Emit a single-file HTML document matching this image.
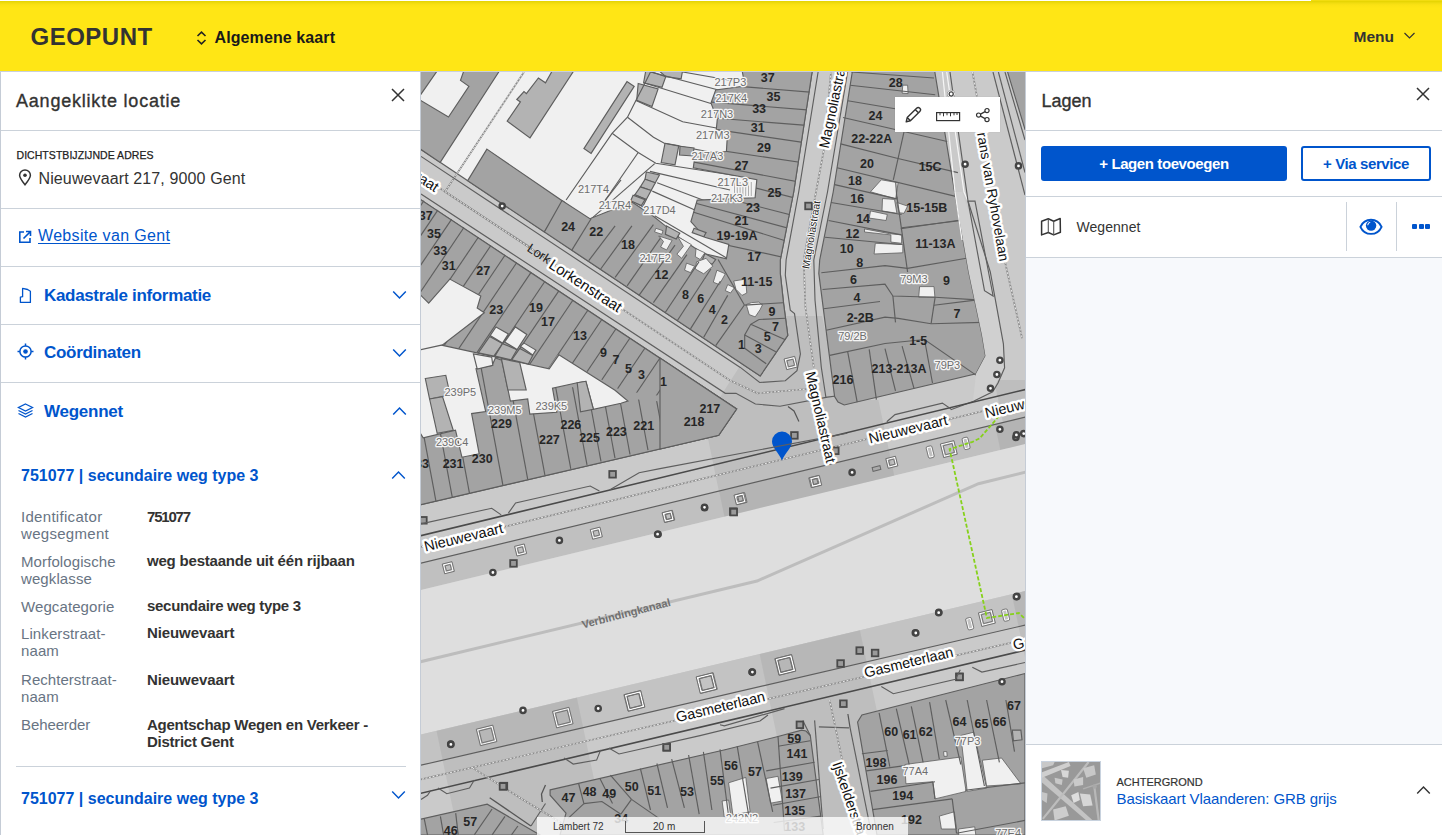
<!DOCTYPE html>
<html><head><meta charset="utf-8">
<style>
*{margin:0;padding:0;box-sizing:border-box}
html,body{width:1442px;height:835px;overflow:hidden;background:#fff;font-family:"Liberation Sans",sans-serif;color:#333332}
.a{position:absolute;white-space:nowrap}
#hdr{position:absolute;left:0;top:1px;width:1442px;height:70px;background:linear-gradient(#e4d300 0px,#f0dc10 2px,#fbe214 4px,#ffe615 7px)}
#topline{position:absolute;left:0;top:0;width:1310px;height:1px;background:#fff}
#hb{position:absolute;left:0;top:71px;width:1442px;height:1px;background:#c9d0dc}
#left{position:absolute;left:0;top:72px;width:421px;height:763px;background:#fff;border-left:1px solid #c5ccd6;border-right:1px solid #c5ccd6}
.hr{position:absolute;height:1px;background:#cbd2da}
.blue{color:#0055cc}
.b{font-weight:bold}
#right{position:absolute;left:1025px;top:72px;width:417px;height:763px;background:#fff;border-left:1px solid #c5ccd6}
#map{position:absolute;left:421px;top:72px;width:604px;height:763px;overflow:hidden;background:#f0f0f0}
.lbl{color:#687483;font-size:15px;line-height:17px}
.val{font-size:15px;line-height:17px;font-weight:bold;color:#333332}
</style></head><body>
<div id="topline"></div><div style="position:absolute;left:1311px;top:0;width:131px;height:1px;background:#f2dc10"></div>
<div id="hdr">
  <div class="a b" style="left:30.5px;top:23.6px;font-size:24px;line-height:24px;color:#333332;letter-spacing:0.5px">GEOPUNT</div>
  <svg class="a" style="left:196px;top:30px" width="11" height="14" viewBox="0 0 11 14"><path d="M1.5 5 L5.5 1.2 L9.5 5 M1.5 9 L5.5 12.8 L9.5 9" fill="none" stroke="#222" stroke-width="1.6"/></svg>
  <div class="a b" style="left:214.5px;top:28.8px;font-size:16px;line-height:16px;color:#1a1a1a;letter-spacing:0.1px">Algemene kaart</div>
  <div class="a b" style="left:1353.5px;top:27.8px;font-size:15.5px;line-height:15.5px;color:#333332">Menu</div>
  <svg class="a" style="left:1403px;top:30px" width="13" height="9" viewBox="0 0 13 9"><path d="M1.5 2 L6.5 7 L11.5 2" fill="none" stroke="#333" stroke-width="1.2"/></svg>
</div>
<div id="hb"></div>


<div id="lb" style="position:absolute;left:0;top:72px;width:1px;height:763px;background:#c5ccd6"></div>
<div id="lr" style="position:absolute;left:420px;top:72px;width:1px;height:763px;background:#c5ccd6"></div>
<div class="a" style="left:16px;top:91.8px;font-size:18px;line-height:18px;letter-spacing:0.79px;-webkit-text-stroke:0.35px #333332">Aangeklikte locatie</div>
<svg class="a" style="left:391px;top:88px" width="14" height="14" viewBox="0 0 14 14"><path d="M1 1 L13 13 M13 1 L1 13" stroke="#333" stroke-width="1.5" fill="none"/></svg>
<div class="hr" style="left:1px;top:130px;width:419px"></div>
<div class="a" style="left:16.5px;top:150px;font-size:10.5px;line-height:10.5px;letter-spacing:0.05px;color:#222;-webkit-text-stroke:0.25px #222">DICHTSTBIJZIJNDE ADRES</div>
<svg class="a" style="left:18px;top:169px" width="14" height="17" viewBox="0 0 14 17"><path d="M7 15.8 C3.5 11.5 1.6 8.6 1.6 6.3 A5.4 5.4 0 0 1 12.4 6.3 C12.4 8.6 10.5 11.5 7 15.8 Z" fill="none" stroke="#333" stroke-width="1.5"/><circle cx="7" cy="6.3" r="1.8" fill="#333"/></svg>
<div class="a" style="left:38.5px;top:171.2px;font-size:16px;line-height:16px;letter-spacing:0.12px">Nieuwevaart 217, 9000 Gent</div>
<div class="hr" style="left:1px;top:208px;width:419px"></div>
<svg class="a" style="left:18px;top:230px" width="14" height="14" viewBox="0 0 14 14"><path d="M6 2 H1.8 V12.2 H12 V8" fill="none" stroke="#0055cc" stroke-width="1.6"/><path d="M8 1.5 H12.5 V6 M12.5 1.5 L5.5 8.5" fill="none" stroke="#0055cc" stroke-width="1.6"/></svg>
<div class="a blue" style="left:38px;top:228.4px;font-size:16px;line-height:16px;letter-spacing:0.33px;text-decoration:underline;text-underline-offset:2px">Website van Gent</div>
<div class="hr" style="left:1px;top:266px;width:419px"></div>
<svg class="a" style="left:18px;top:287px" width="14" height="17" viewBox="0 0 14 17"><path d="M4.6 1.4 L9.6 2.5 L12.4 4.2 L12.4 15.4 L2.4 15.4 L2.4 10.1 L4.6 9.7 Z" fill="none" stroke="#0055cc" stroke-width="1.3" stroke-linejoin="round"/></svg>
<div class="a blue b" style="left:44px;top:286.8px;font-size:17px;line-height:17px;letter-spacing:-0.33px">Kadastrale informatie</div>
<svg class="a" style="left:392px;top:290px" width="15" height="10" viewBox="0 0 15 10"><path d="M1.2 1.5 L7.5 8 L13.8 1.5" fill="none" stroke="#0055cc" stroke-width="1.5"/></svg>
<div class="hr" style="left:1px;top:324px;width:419px"></div>
<svg class="a" style="left:17px;top:343px" width="17" height="17" viewBox="0 0 17 17"><circle cx="8.5" cy="8.5" r="5.6" fill="none" stroke="#0055cc" stroke-width="1.5"/><circle cx="8.5" cy="8.5" r="2.3" fill="#0055cc"/><path d="M8.5 0.5V2.9M8.5 14.1V16.5M0.5 8.5H2.9M14.1 8.5H16.5" stroke="#0055cc" stroke-width="1.5"/></svg>
<div class="a blue b" style="left:44px;top:344.4px;font-size:17px;line-height:17px;letter-spacing:-0.3px">Coördinaten</div>
<svg class="a" style="left:392px;top:348px" width="15" height="10" viewBox="0 0 15 10"><path d="M1.2 1.5 L7.5 8 L13.8 1.5" fill="none" stroke="#0055cc" stroke-width="1.5"/></svg>
<div class="hr" style="left:1px;top:382px;width:419px"></div>
<svg class="a" style="left:17px;top:403px" width="17" height="15" viewBox="0 0 17 15"><path d="M8.5 1 L15.5 4.5 L8.5 8 L1.5 4.5 Z" fill="none" stroke="#0055cc" stroke-width="1.3"/><path d="M1.5 7.5 L8.5 11 L15.5 7.5 M1.5 10.5 L8.5 14 L15.5 10.5" fill="none" stroke="#0055cc" stroke-width="1.3"/></svg>
<div class="a blue b" style="left:44px;top:402.6px;font-size:17px;line-height:17px;letter-spacing:-0.25px">Wegennet</div>
<svg class="a" style="left:392px;top:406px" width="15" height="10" viewBox="0 0 15 10"><path d="M1.2 8.5 L7.5 2 L13.8 8.5" fill="none" stroke="#0055cc" stroke-width="1.5"/></svg>
<div class="a blue b" style="left:21px;top:468px;font-size:16px;line-height:16px">751077 | secundaire weg type 3</div>
<svg class="a" style="left:391px;top:470px" width="15" height="10" viewBox="0 0 15 10"><path d="M1.2 8.5 L7.5 2 L13.8 8.5" fill="none" stroke="#0055cc" stroke-width="1.4"/></svg>
<div class="a lbl" style="left:21px;top:508.3px;letter-spacing:0.3px">Identificator<br>wegsegment</div>
<div class="a lbl" style="left:21px;top:553.3px;letter-spacing:0.1px">Morfologische<br>wegklasse</div>
<div class="a lbl" style="left:21px;top:598px;letter-spacing:0.1px">Wegcategorie</div>
<div class="a lbl" style="left:21px;top:625.2px;letter-spacing:0.1px">Linkerstraat-<br>naam</div>
<div class="a lbl" style="left:21px;top:671px;letter-spacing:0.05px">Rechterstraat-<br>naam</div>
<div class="a lbl" style="left:21px;top:716.3px;letter-spacing:-0.1px">Beheerder</div>
<div class="a val" style="left:147px;top:507.7px;letter-spacing:-1.2px">751077</div>
<div class="a val" style="left:147px;top:552.3px;letter-spacing:-0.2px">weg bestaande uit één rijbaan</div>
<div class="a val" style="left:147px;top:597.3px;letter-spacing:-0.3px">secundaire weg type 3</div>
<div class="a val" style="left:147px;top:624.3px;letter-spacing:-0.1px">Nieuwevaart</div>
<div class="a val" style="left:147px;top:670.8px;letter-spacing:-0.1px">Nieuwevaart</div>
<div class="a val" style="left:147px;top:715.5px;letter-spacing:-0.25px">Agentschap Wegen en Verkeer -<br>District Gent</div>
<div class="hr" style="left:16px;top:766px;width:390px"></div>
<div class="a blue b" style="left:21px;top:790.5px;font-size:16px;line-height:16px">751077 | secundaire weg type 3</div>
<svg class="a" style="left:391px;top:790px" width="15" height="10" viewBox="0 0 15 10"><path d="M1.2 1.5 L7.5 8 L13.8 1.5" fill="none" stroke="#0055cc" stroke-width="1.4"/></svg>


<div id="map"><svg width="604" height="763" viewBox="421 72 604 763" style="position:absolute;left:0;top:0;font-family:Liberation Sans"><rect x="421" y="72" width="604" height="763" fill="#cacaca"/>
<polygon points="747.0,355.0 785.0,316.0 822.0,316.0 840.0,400.0 878.4,400.0 895.0,479.0 724.5,518.6 707.8,437.4 721.0,395.4" fill="rgba(0,0,0,0.06)" stroke="none" stroke-width="1.15" />
<polygon points="994.0,380.0 1040.0,380.0 1040.0,600.0 1040.0,600.0" fill="rgba(0,0,0,0.06)" stroke="none" stroke-width="1.15" />
<polygon points="419.0,70.0 812.4,70.0 793.7,192.0 780.3,260.0 780.3,273.4 783.6,303.6 787.8,335.4 760.2,376.0 419.0,148.2" fill="#f0f0f0" stroke="#5e5e5e" stroke-width="1.15" />
<polygon points="419.0,198.6 736.6,409.0 718.7,435.3 419.0,505.0" fill="#f0f0f0" stroke="#5e5e5e" stroke-width="1.15" />
<polygon points="1007.0,70.0 1030.0,70.0 1030.0,135.0 1025.0,129.5" fill="#a3a3a3" stroke="#5e5e5e" stroke-width="1.15" />
<polygon points="419.0,70.0 500.0,70.0 440.2,162.4 419.0,148.2" fill="#a3a3a3" stroke="#5e5e5e" stroke-width="1.15" />
<polygon points="437.8,70.0 464.1,70.0 460.5,80.4 468.9,86.4 448.5,117.0 419.0,99.5 419.0,97.0" fill="#f0f0f0" stroke="#5e5e5e" stroke-width="1.15" />
<polygon points="507.2,121.1 520.4,101.9 516.8,99.5 524.0,91.6 526.4,93.6 538.4,78.0 545.5,82.8 552.7,70.0 574.3,70.0 530.0,137.9" fill="#b3b3b3" stroke="#5e5e5e" stroke-width="1.15" />
<polygon points="583.9,148.6 591.1,153.4 634.2,86.4 627.0,81.6" fill="#b3b3b3" stroke="#5e5e5e" stroke-width="1.15" />
<polygon points="486.9,149.1 564.7,202.5 544.4,231.9 467.7,180.7" fill="#a3a3a3" stroke="#5e5e5e" stroke-width="1.15" />
<polyline points="524.0,72.0 445.0,191.8 531.2,248.0" fill="none" stroke="#8c8c8c" stroke-width="1.7"/>
<polyline points="524.0,72.0 445.0,191.8 531.2,248.0" fill="none" stroke="#f2f2f2" stroke-width="0.9" stroke-dasharray="2,1.6"/>
<polygon points="645.9,70.0 665.8,76.6 662.0,87.3 643.6,82.7" fill="#b3b3b3" stroke="#5e5e5e" stroke-width="1.15" />
<polygon points="638.2,83.5 658.1,88.9 652.0,106.5 636.7,100.4" fill="#b3b3b3" stroke="#5e5e5e" stroke-width="1.15" />
<polygon points="658.1,70.0 682.7,70.0 681.1,78.9 665.8,76.6" fill="#b3b3b3" stroke="#5e5e5e" stroke-width="1.15" />
<polygon points="665.0,143.3 678.8,145.6 675.0,164.8 661.2,162.5" fill="#b3b3b3" stroke="#5e5e5e" stroke-width="1.15" />
<polygon points="646.3,172.0 659.5,175.0 655.3,182.8 645.1,179.2" fill="#b3b3b3" stroke="#5e5e5e" stroke-width="1.15" />
<polygon points="645.1,179.2 655.3,182.8 651.1,190.5 640.3,186.9" fill="#b3b3b3" stroke="#5e5e5e" stroke-width="1.15" />
<polygon points="640.3,186.9 651.1,190.5 646.3,199.5 634.9,194.7" fill="#b3b3b3" stroke="#5e5e5e" stroke-width="1.15" />
<polygon points="634.9,194.7 646.3,199.5 642.7,206.7 631.9,200.7" fill="#b3b3b3" stroke="#5e5e5e" stroke-width="1.15" />
<polyline points="566.1,200.0 612.1,133.3 627.5,117.2 635.9,100.4 645.9,81.2 650.5,72.0" fill="none" stroke="#5e5e5e" stroke-width="1.15" />
<polyline points="604.0,202.0 638.2,152.5" fill="none" stroke="#5e5e5e" stroke-width="1.15" />
<polyline points="612.1,133.3 638.2,152.5 655.8,163.2 740.0,176.3" fill="none" stroke="#5e5e5e" stroke-width="1.15" />
<polyline points="627.5,117.2 653.5,137.2 664.3,143.3 740.0,157.9" fill="none" stroke="#5e5e5e" stroke-width="1.15" />
<polyline points="635.9,100.4 682.7,121.8 716.4,128.0" fill="none" stroke="#5e5e5e" stroke-width="1.15" />
<polyline points="643.6,82.7 713.3,104.2" fill="none" stroke="#5e5e5e" stroke-width="1.15" />
<polyline points="650.5,72.0 728.7,92.7" fill="none" stroke="#5e5e5e" stroke-width="1.15" />
<polyline points="649.9,171.4 730.0,190.0" fill="none" stroke="#5e5e5e" stroke-width="1.15" />
<polyline points="657.1,182.8 730.0,210.3" fill="none" stroke="#5e5e5e" stroke-width="1.15" />
<polyline points="652.3,191.1 695.4,210.3 730.0,227.0" fill="none" stroke="#5e5e5e" stroke-width="1.15" />
<polyline points="654.7,215.7 730.0,260.0" fill="none" stroke="#5e5e5e" stroke-width="1.15" />
<polyline points="590.0,219.9 654.7,163.6" fill="none" stroke="#5e5e5e" stroke-width="1.15" />
<polyline points="682.7,72.0 740.0,82.0" fill="none" stroke="#5e5e5e" stroke-width="1.15" />
<polyline points="605.4,200.1 621.0,179.8" fill="none" stroke="#5e5e5e" stroke-width="1.15" />
<polygon points="680.0,146.2 694.0,148.0 693.0,156.0 679.5,155.0" fill="#a3a3a3" stroke="#5e5e5e" stroke-width="1.15" />
<rect x="732.5" y="180" width="21" height="17.5" fill="#f4f4f4"/>
<line x1="734.5" y1="182" x2="734.5" y2="196" stroke="#9a9a9a" stroke-width="0.8"/>
<line x1="737.3" y1="182" x2="737.3" y2="196" stroke="#9a9a9a" stroke-width="0.8"/>
<line x1="740.1" y1="182" x2="740.1" y2="196" stroke="#9a9a9a" stroke-width="0.8"/>
<line x1="742.9" y1="182" x2="742.9" y2="196" stroke="#9a9a9a" stroke-width="0.8"/>
<line x1="745.7" y1="182" x2="745.7" y2="196" stroke="#9a9a9a" stroke-width="0.8"/>
<line x1="748.5" y1="182" x2="748.5" y2="196" stroke="#9a9a9a" stroke-width="0.8"/>
<line x1="751.3" y1="182" x2="751.3" y2="196" stroke="#9a9a9a" stroke-width="0.8"/>
<polygon points="544.4,231.9 562.0,200.5 589.9,218.7 631.9,202.0 653.4,216.3 665.4,225.9 679.8,237.9 694.1,247.5 703.7,253.5 726.4,258.8 728.8,244.5 704.8,237.3 690.9,221.7 697.2,200.1 755.1,197.7 756.8,179.8 693.3,167.8 695.3,153.4 726.4,151.5 727.6,131.9 716.3,129.5 717.3,119.4 711.0,103.1 715.7,90.0 745.0,86.0 742.0,70.0 812.4,70.0 793.7,192.0 780.3,260.0 780.3,273.4 783.6,303.6 787.8,335.4 760.2,376.0" fill="#a3a3a3" stroke="#5e5e5e" stroke-width="1.15" />
<polygon points="633.1,195.3 645.0,199.6 641.4,205.6 630.7,200.8" fill="#b3b3b3" stroke="#5e5e5e" stroke-width="1.15" />
<polygon points="666.6,225.9 679.8,233.1 676.2,239.1 665.4,234.3" fill="#b3b3b3" stroke="#5e5e5e" stroke-width="1.15" />
<polygon points="694.1,228.3 706.1,232.6 703.7,236.7 692.2,232.6" fill="#b3b3b3" stroke="#5e5e5e" stroke-width="1.15" />
<polygon points="704.9,253.5 715.7,259.5 712.1,264.3 702.5,259.5" fill="#b3b3b3" stroke="#5e5e5e" stroke-width="1.15" />
<polygon points="655.8,228.3 663.0,230.7 661.8,234.3 654.6,231.9" fill="#f0f0f0" stroke="#5e5e5e" stroke-width="0.8" />
<polygon points="658.7,236.0 672.1,240.3 666.6,249.9 660.6,247.0 663.5,241.5" fill="#f0f0f0" stroke="#5e5e5e" stroke-width="0.8" />
<polygon points="677.8,236.7 691.3,244.6 681.7,258.3 676.9,254.2 683.4,246.3" fill="#f0f0f0" stroke="#5e5e5e" stroke-width="0.8" />
<polygon points="696.0,248.7 704.9,252.8 700.1,259.5 695.3,256.6" fill="#f0f0f0" stroke="#5e5e5e" stroke-width="0.8" />
<polygon points="686.5,263.1 694.6,266.2 690.5,272.6 684.6,270.2" fill="#f0f0f0" stroke="#5e5e5e" stroke-width="0.8" />
<polygon points="696.5,261.9 706.1,258.3 712.8,266.2 703.7,273.8 695.3,269.0" fill="#f0f0f0" stroke="#5e5e5e" stroke-width="0.8" />
<polygon points="716.9,270.2 725.3,273.8 719.3,284.6 713.3,282.2" fill="#f0f0f0" stroke="#5e5e5e" stroke-width="0.8" />
<polygon points="727.7,284.6 734.4,287.7 730.5,293.0 725.3,290.6" fill="#f0f0f0" stroke="#5e5e5e" stroke-width="0.8" />
<polygon points="733.7,281.0 745.6,279.1 746.8,293.0 742.0,295.4 736.0,289.4" fill="#f0f0f0" stroke="#5e5e5e" stroke-width="0.8" />
<polygon points="746.3,304.5 751.6,302.6 758.8,302.1 762.4,305.0 760.0,309.8 755.2,316.9 749.2,314.6" fill="#f0f0f0" stroke="#5e5e5e" stroke-width="0.8" />
<polyline points="572.0,249.9 591.1,218.7" fill="none" stroke="#5e5e5e" stroke-width="1.15" />
<polyline points="588.7,260.7 615.1,225.9" fill="none" stroke="#5e5e5e" stroke-width="1.15" />
<polyline points="600.7,269.0 631.9,225.9" fill="none" stroke="#5e5e5e" stroke-width="1.15" />
<polyline points="615.1,277.4 653.4,224.7" fill="none" stroke="#5e5e5e" stroke-width="1.15" />
<polyline points="627.1,285.8 660.6,237.9" fill="none" stroke="#5e5e5e" stroke-width="1.15" />
<polyline points="639.0,295.4 675.0,245.1" fill="none" stroke="#5e5e5e" stroke-width="1.15" />
<polyline points="653.4,302.6 686.9,254.7" fill="none" stroke="#5e5e5e" stroke-width="1.15" />
<polyline points="665.4,312.2 698.9,261.9" fill="none" stroke="#5e5e5e" stroke-width="1.15" />
<polyline points="677.4,320.5 710.9,269.0" fill="none" stroke="#5e5e5e" stroke-width="1.15" />
<polyline points="690.5,328.9 720.5,281.0" fill="none" stroke="#5e5e5e" stroke-width="1.15" />
<polyline points="703.7,337.3 727.7,295.4" fill="none" stroke="#5e5e5e" stroke-width="1.15" />
<polyline points="715.7,345.7 744.4,305.0" fill="none" stroke="#5e5e5e" stroke-width="1.15" />
<polyline points="718.1,259.5 744.4,305.0" fill="none" stroke="#5e5e5e" stroke-width="1.15" />
<polyline points="759.0,319.5 785.4,318.3" fill="none" stroke="#5e5e5e" stroke-width="1.15" />
<polyline points="750.7,324.3 785.4,339.8" fill="none" stroke="#5e5e5e" stroke-width="1.15" />
<polyline points="744.7,335.0 775.8,351.8" fill="none" stroke="#5e5e5e" stroke-width="1.15" />
<polyline points="744.7,348.2 766.2,363.8" fill="none" stroke="#5e5e5e" stroke-width="1.15" />
<polyline points="759.0,319.5 750.7,324.3 744.7,335.0 744.7,348.2" fill="none" stroke="#5e5e5e" stroke-width="1.15" />
<polyline points="744.7,305.1 783.0,302.7" fill="none" stroke="#5e5e5e" stroke-width="1.15" />
<clipPath id="cNW"><polygon points="544.4,231.9 562.0,200.5 589.9,218.7 631.9,202.0 653.4,216.3 665.4,225.9 679.8,237.9 694.1,247.5 703.7,253.5 726.4,258.8 728.8,244.5 704.8,237.3 690.9,221.7 697.2,200.1 755.1,197.7 756.8,179.8 693.3,167.8 695.3,153.4 726.4,151.5 727.6,131.9 716.3,129.5 717.3,119.4 711.0,103.1 715.7,90.0 745.0,86.0 742.0,72.0 812.4,72.0 793.7,192.0 780.3,260.0 780.3,273.4 783.6,303.6 787.8,335.4 760.2,376.0"/></clipPath><g clip-path="url(#cNW)">
<polyline points="692.9,82.6 819.8,92.9" fill="none" stroke="#5e5e5e" stroke-width="1.15" />
<polyline points="692.9,100.6 819.8,110.9" fill="none" stroke="#5e5e5e" stroke-width="1.15" />
<polyline points="692.9,116.2 819.8,126.5" fill="none" stroke="#5e5e5e" stroke-width="1.15" />
<polyline points="692.9,126.1 819.8,144.9" fill="none" stroke="#5e5e5e" stroke-width="1.15" />
<polyline points="692.9,146.4 819.8,165.3" fill="none" stroke="#5e5e5e" stroke-width="1.15" />
<polyline points="692.9,161.9 819.8,185.9" fill="none" stroke="#5e5e5e" stroke-width="1.15" />
<polyline points="692.9,171.8 819.8,204.4" fill="none" stroke="#5e5e5e" stroke-width="1.15" />
<polyline points="692.9,189.8 819.8,222.3" fill="none" stroke="#5e5e5e" stroke-width="1.15" />
<polyline points="692.9,202.5 819.8,236.8" fill="none" stroke="#5e5e5e" stroke-width="1.15" />
<polyline points="692.9,212.0 819.8,251.5" fill="none" stroke="#5e5e5e" stroke-width="1.15" />
<polyline points="692.9,237.7 819.8,265.2" fill="none" stroke="#5e5e5e" stroke-width="1.15" />
</g>
<polygon points="419.0,198.6 736.6,409.0 718.7,435.3 419.0,505.0" fill="#a3a3a3" stroke="#5e5e5e" stroke-width="1.15" />
<clipPath id="cSL"><polygon points="421.0,198.6 736.6,409.0 690.0,400.0 621.0,390.6 557.5,355.0 548.3,368.4 441.6,345.3 421.0,335.0"/></clipPath><clipPath id="cNV"><polygon points="421.0,505.0 718.7,435.3 700.0,405.0 621.0,398.0 540.0,380.0 421.0,355.0"/></clipPath><g clip-path="url(#cSL)">
<polyline points="424.0,200.6 334.6,333.2" fill="none" stroke="#5e5e5e" stroke-width="1.15" />
<polyline points="438.0,209.9 348.6,342.6" fill="none" stroke="#5e5e5e" stroke-width="1.15" />
<polyline points="451.7,219.1 362.3,351.7" fill="none" stroke="#5e5e5e" stroke-width="1.15" />
<polyline points="464.1,227.3 374.7,360.0" fill="none" stroke="#5e5e5e" stroke-width="1.15" />
<polyline points="478.5,237.0 389.1,369.6" fill="none" stroke="#5e5e5e" stroke-width="1.15" />
<polyline points="491.0,245.3 401.6,377.9" fill="none" stroke="#5e5e5e" stroke-width="1.15" />
<polyline points="505.3,254.8 415.9,387.5" fill="none" stroke="#5e5e5e" stroke-width="1.15" />
<polyline points="516.8,262.5 427.4,395.1" fill="none" stroke="#5e5e5e" stroke-width="1.15" />
<polyline points="531.2,272.1 441.8,404.7" fill="none" stroke="#5e5e5e" stroke-width="1.15" />
<polyline points="545.0,281.3 455.6,413.9" fill="none" stroke="#5e5e5e" stroke-width="1.15" />
<polyline points="559.0,290.6 469.6,423.3" fill="none" stroke="#5e5e5e" stroke-width="1.15" />
<polyline points="573.0,300.0 483.6,432.6" fill="none" stroke="#5e5e5e" stroke-width="1.15" />
<polyline points="588.0,310.0 498.6,442.6" fill="none" stroke="#5e5e5e" stroke-width="1.15" />
<polyline points="602.0,319.3 512.6,452.0" fill="none" stroke="#5e5e5e" stroke-width="1.15" />
<polyline points="616.0,328.7 526.6,461.3" fill="none" stroke="#5e5e5e" stroke-width="1.15" />
<polyline points="630.0,338.0 540.6,470.6" fill="none" stroke="#5e5e5e" stroke-width="1.15" />
<polyline points="645.0,348.0 555.6,480.6" fill="none" stroke="#5e5e5e" stroke-width="1.15" />
<polyline points="660.0,358.0 570.6,490.7" fill="none" stroke="#5e5e5e" stroke-width="1.15" />
<polyline points="675.0,368.0 585.6,500.7" fill="none" stroke="#5e5e5e" stroke-width="1.15" />
<polyline points="690.0,378.0 600.6,510.7" fill="none" stroke="#5e5e5e" stroke-width="1.15" />
<polyline points="705.0,388.0 615.6,520.7" fill="none" stroke="#5e5e5e" stroke-width="1.15" />
</g><g clip-path="url(#cNV)">
<polyline points="436.0,501.4 412.3,373.6" fill="none" stroke="#5e5e5e" stroke-width="1.15" />
<polyline points="452.3,497.4 428.6,369.6" fill="none" stroke="#5e5e5e" stroke-width="1.15" />
<polyline points="469.5,493.3 445.8,365.5" fill="none" stroke="#5e5e5e" stroke-width="1.15" />
<polyline points="502.9,485.2 479.2,357.4" fill="none" stroke="#5e5e5e" stroke-width="1.15" />
<polyline points="527.7,479.2 504.0,351.4" fill="none" stroke="#5e5e5e" stroke-width="1.15" />
<polyline points="544.9,475.1 521.2,347.3" fill="none" stroke="#5e5e5e" stroke-width="1.15" />
<polyline points="570.8,468.8 547.1,341.0" fill="none" stroke="#5e5e5e" stroke-width="1.15" />
<polyline points="587.0,464.9 563.3,337.1" fill="none" stroke="#5e5e5e" stroke-width="1.15" />
<polyline points="601.0,461.5 577.3,333.7" fill="none" stroke="#5e5e5e" stroke-width="1.15" />
<polyline points="615.0,458.1 591.3,330.3" fill="none" stroke="#5e5e5e" stroke-width="1.15" />
<polyline points="630.0,454.5 606.3,326.7" fill="none" stroke="#5e5e5e" stroke-width="1.15" />
<polyline points="648.0,450.1 624.3,322.3" fill="none" stroke="#5e5e5e" stroke-width="1.15" />
<polyline points="665.0,446.0 641.3,318.2" fill="none" stroke="#5e5e5e" stroke-width="1.15" />
<polyline points="683.0,441.7 659.3,313.9" fill="none" stroke="#5e5e5e" stroke-width="1.15" />
</g>
<polygon points="419.0,431.3 423.2,437.8 455.5,430.2 461.9,457.2 479.2,453.9 471.6,413.6 485.7,411.5 476.0,368.8 492.1,365.6 495.4,358.0 501.8,360.2 510.4,401.1 527.7,399.0 529.8,414.1 556.8,412.3 552.5,388.2 577.2,382.8 585.9,381.3 593.4,409.3 621.0,403.3 627.9,401.1 615.0,390.3 558.9,354.8 549.2,368.8 441.5,345.1 419.0,330.0" fill="#f0f0f0" stroke="#5e5e5e" stroke-width="1.15" />
<polygon points="419.0,293.5 428.7,303.1 449.8,279.1 480.8,296.0 477.2,308.1 484.3,312.7 442.5,344.9 419.0,350.1" fill="#f0f0f0" stroke="#5e5e5e" stroke-width="1.15" />
<polygon points="425.3,378.5 445.8,375.3 450.1,394.7 429.6,399.0" fill="#b3b3b3" stroke="#5e5e5e" stroke-width="1.15" />
<polygon points="429.6,399.0 442.6,396.8 453.3,430.2 437.2,433.4" fill="#b3b3b3" stroke="#5e5e5e" stroke-width="1.15" />
<polygon points="577.2,382.8 585.9,381.3 593.4,409.3 580.5,411.9" fill="#b3b3b3" stroke="#5e5e5e" stroke-width="1.15" />
<polygon points="478.3,352.8 489.6,336.6 502.5,343.6 493.9,356.0" fill="#b3b3b3" stroke="#5e5e5e" stroke-width="1.15" />
<polygon points="495.0,356.0 502.5,343.6 517.1,349.6 511.1,359.8" fill="#b3b3b3" stroke="#5e5e5e" stroke-width="1.15" />
<polygon points="511.7,359.8 519.8,348.5 532.7,355.5 528.4,364.1" fill="#b3b3b3" stroke="#5e5e5e" stroke-width="1.15" />
<polygon points="501.4,358.7 519.7,362.5 526.2,390.0 507.9,390.0" fill="#b3b3b3" stroke="#5e5e5e" stroke-width="1.15" />
<polygon points="490.1,335.6 496.0,326.9 508.4,333.9 502.5,343.1" fill="#f0f0f0" stroke="#5e5e5e" stroke-width="1.15" />
<polygon points="504.7,342.0 515.4,326.9 526.8,334.5 517.1,349.6" fill="#f0f0f0" stroke="#5e5e5e" stroke-width="1.15" />
<polygon points="520.3,346.3 524.1,343.1 535.9,350.1 532.7,355.0" fill="#f0f0f0" stroke="#5e5e5e" stroke-width="1.15" />
<polygon points="473.4,353.9 491.7,357.1 492.8,365.2 477.2,369.0" fill="#f0f0f0" stroke="#5e5e5e" stroke-width="1.15" />
<polyline points="421.0,156.4 740.3,367.4 759.7,382.5 785.3,380.7 797.0,370.6 800.4,353.9 794.5,313.6 790.3,310.3 785.3,275.1 786.1,260.0 798.7,192.0 818.1,72.0" fill="none" stroke="#5e5e5e" stroke-width="1.15" />
<polyline points="421.0,175.7 729.6,380.3 757.6,393.3 807.1,389.0" fill="none" stroke="#8c8c8c" stroke-width="1.7"/>
<polyline points="421.0,175.7 729.6,380.3 757.6,393.3 807.1,389.0" fill="none" stroke="#f2f2f2" stroke-width="0.9" stroke-dasharray="2,1.6"/>
<polyline points="831.0,72.0 823.9,149.6 816.0,192.0 803.7,260.0 805.4,307.0 813.8,367.3" fill="none" stroke="#8c8c8c" stroke-width="1.7"/>
<polyline points="831.0,72.0 823.9,149.6 816.0,192.0 803.7,260.0 805.4,307.0 813.8,367.3" fill="none" stroke="#f2f2f2" stroke-width="0.9" stroke-dasharray="2,1.6"/>
<polyline points="421.0,194.0 725.3,393.3 736.0,393.3 755.4,404.0 780.0,406.2 827.4,397.1 840.0,395.5" fill="none" stroke="#5e5e5e" stroke-width="1.15" />
<polyline points="788.0,406.4 794.0,411.0 798.9,421.4" fill="none" stroke="#555" stroke-width="1.2" />
<polygon points="660.0,357.9 736.6,409.0 718.7,435.3 660.0,449.0" fill="#a3a3a3" stroke="#5e5e5e" stroke-width="1.15" />
<polygon points="852.6,70.0 934.5,70.0 954.6,192.0 968.7,272.0 982.0,335.0 985.5,356.0 976.0,373.8 844.2,405.0 838.0,402.0 834.6,396.5 818.8,273.4 819.7,260.0 833.2,192.0" fill="#a3a3a3" stroke="#5e5e5e" stroke-width="1.15" />
<polygon points="870.5,191.8 881.3,179.8 898.1,182.7 895.7,198.9" fill="#f0f0f0" stroke="#5e5e5e" stroke-width="0.8" />
<polygon points="882.5,198.5 894.5,199.4 896.9,213.3 882.0,210.9" fill="#f0f0f0" stroke="#5e5e5e" stroke-width="0.8" />
<polygon points="896.9,202.5 907.6,206.1 904.0,213.3 899.3,212.8" fill="#f0f0f0" stroke="#5e5e5e" stroke-width="0.8" />
<polygon points="870.5,210.9 887.3,214.5 886.1,220.5 869.3,218.1" fill="#f0f0f0" stroke="#5e5e5e" stroke-width="0.8" />
<polygon points="864.5,228.9 889.7,233.7 901.6,234.9 901.6,243.3 890.9,242.1 890.9,234.9 864.5,232.0" fill="#f0f0f0" stroke="#5e5e5e" stroke-width="0.8" />
<polygon points="875.3,243.3 902.8,244.5 902.8,252.8 874.1,254.0" fill="#f0f0f0" stroke="#5e5e5e" stroke-width="0.8" />
<polygon points="902.8,85.2 907.6,85.2 908.1,93.6 902.1,93.1" fill="#f0f0f0" stroke="#5e5e5e" stroke-width="0.8" />
<polygon points="919.6,286.6 934.0,286.6 934.9,297.1 918.7,297.1" fill="#f0f0f0" stroke="#5e5e5e" stroke-width="0.8" />
<polyline points="851.3,72.0 934.0,78.0" fill="none" stroke="#5e5e5e" stroke-width="1.15" />
<polyline points="850.1,85.2 935.2,94.8" fill="none" stroke="#5e5e5e" stroke-width="1.15" />
<polyline points="847.8,100.7 904.0,110.3" fill="none" stroke="#5e5e5e" stroke-width="1.15" />
<polyline points="843.0,117.5 947.2,141.5" fill="none" stroke="#5e5e5e" stroke-width="1.15" />
<polyline points="840.6,143.9 896.9,158.2" fill="none" stroke="#5e5e5e" stroke-width="1.15" />
<polyline points="837.0,167.8 956.7,196.6" fill="none" stroke="#5e5e5e" stroke-width="1.15" />
<polyline points="834.6,184.6 896.9,198.9" fill="none" stroke="#5e5e5e" stroke-width="1.15" />
<polyline points="831.0,202.5 901.6,214.5" fill="none" stroke="#5e5e5e" stroke-width="1.15" />
<polyline points="828.6,220.5 901.6,234.9" fill="none" stroke="#5e5e5e" stroke-width="1.15" />
<polyline points="825.0,237.3 901.6,244.5" fill="none" stroke="#5e5e5e" stroke-width="1.15" />
<polyline points="904.0,131.9 893.3,179.8" fill="none" stroke="#5e5e5e" stroke-width="1.15" />
<polyline points="896.9,158.2 957.9,172.6" fill="none" stroke="#5e5e5e" stroke-width="1.15" />
<polyline points="895.7,182.2 896.9,198.9" fill="none" stroke="#5e5e5e" stroke-width="1.15" />
<polyline points="896.9,196.6 907.6,272.0" fill="none" stroke="#5e5e5e" stroke-width="1.15" />
<polyline points="901.6,227.7 961.5,220.5" fill="none" stroke="#5e5e5e" stroke-width="1.15" />
<polyline points="821.3,272.8 885.0,265.7 907.4,268.3 969.4,257.8" fill="none" stroke="#5e5e5e" stroke-width="1.15" />
<polyline points="822.5,289.5 885.0,284.1 892.9,296.0 935.1,297.3 977.3,299.9" fill="none" stroke="#5e5e5e" stroke-width="1.15" />
<polyline points="823.7,308.7 880.0,301.5" fill="none" stroke="#5e5e5e" stroke-width="1.15" />
<polyline points="892.9,296.0 895.5,322.4" fill="none" stroke="#5e5e5e" stroke-width="1.15" />
<polyline points="826.1,330.2 885.0,317.1 898.2,318.4 931.1,323.7 982.5,322.4" fill="none" stroke="#5e5e5e" stroke-width="1.15" />
<polyline points="935.1,297.3 931.1,323.7" fill="none" stroke="#5e5e5e" stroke-width="1.15" />
<polyline points="933.8,305.2 977.3,299.9" fill="none" stroke="#5e5e5e" stroke-width="1.15" />
<polyline points="829.7,355.4 885.0,343.5 924.5,339.5 976.0,375.1" fill="none" stroke="#5e5e5e" stroke-width="1.15" />
<polyline points="847.7,351.8 857.2,402.1" fill="none" stroke="#5e5e5e" stroke-width="1.15" />
<polyline points="869.2,349.4 876.4,399.7" fill="none" stroke="#5e5e5e" stroke-width="1.15" />
<polyline points="885.0,348.7 895.5,390.9" fill="none" stroke="#5e5e5e" stroke-width="1.15" />
<polyline points="902.1,346.1 914.0,388.3" fill="none" stroke="#5e5e5e" stroke-width="1.15" />
<polyline points="924.5,339.5 932.5,383.0" fill="none" stroke="#5e5e5e" stroke-width="1.15" />
<polyline points="900.8,228.8 964.1,219.5" fill="none" stroke="#5e5e5e" stroke-width="1.15" />
<polygon points="954.6,192 962,192 990,272 1003,344 1004,368 992,392 973,401 976,373.8 985.5,356 982,335 968.7,272" fill="#d0d0d0"/>
<polyline points="942.4,72.0 955.0,192.0 962.0,240.0" fill="none" stroke="#f6f6f6" stroke-width="1.2" />
<polyline points="946.7,72.0 964.0,192.0 968.0,201.0" fill="none" stroke="#f6f6f6" stroke-width="1.2" />
<polygon points="968.0,201.1 975.0,201.1 993.1,296.0 984.5,290.7" fill="none" stroke="#5e5e5e" stroke-width="1.15" />
<polyline points="950.0,72.0 968.0,201.0 990.3,272.0 1003.4,343.9 1004.6,367.8 998.0,383.0 992.7,391.8 973.5,401.3 950.7,409.7" fill="none" stroke="#5e5e5e" stroke-width="1.15" />
<polyline points="1005.0,261.7 1022.1,338.2" fill="none" stroke="#8c8c8c" stroke-width="1.7"/>
<polyline points="1005.0,261.7 1022.1,338.2" fill="none" stroke="#f2f2f2" stroke-width="0.9" stroke-dasharray="2,1.6"/>
<polyline points="972.5,72.0 976.9,96.4" fill="none" stroke="#8c8c8c" stroke-width="1.7"/>
<polyline points="972.5,72.0 976.9,96.4" fill="none" stroke="#f2f2f2" stroke-width="0.9" stroke-dasharray="2,1.6"/>
<polyline points="998.4,72.0 1025.0,172.6" fill="none" stroke="#5e5e5e" stroke-width="1.15" />
<polyline points="993.0,72.0 1025.0,195.0" fill="none" stroke="#5e5e5e" stroke-width="1.15" />
<polyline points="1005.0,72.0 1025.0,140.0" fill="none" stroke="#5e5e5e" stroke-width="1.15" />
<polyline points="847.6,72.0 827.5,192.0 813.8,260.0 815.0,300.0 821.3,367.3 826.0,398.0" fill="none" stroke="#5e5e5e" stroke-width="1.15" />
<polygon points="415.0,564.6 1030.0,415.9 1030.0,442.8 415.0,591.5" fill="#c0c0c0" stroke="none" stroke-width="1.15" />
<polygon points="415.0,591.5 1030.0,442.8 1030.0,589.9 415.0,736.0" fill="#dedede" stroke="none" stroke-width="1.15" />
<polygon points="415.0,736.0 1030.0,589.9 1030.0,624.0 415.0,766.6" fill="#c3c3c3" stroke="none" stroke-width="1.15" />
<clipPath id="cg436"><polygon points="415.0,736.0 1030.0,589.9 1030.0,900.0 415.0,900.0"/></clipPath>
<polygon points="400.6,560.0 548.0,560.0 606.8,840.0 459.4,840.0" fill="rgba(0,0,0,0.06)" clip-path="url(#cg436)"/>
<clipPath id="cg759"><polygon points="415.0,736.0 1030.0,589.9 1030.0,900.0 415.0,900.0"/></clipPath>
<polygon points="739.9,560.0 845.2,560.0 904.0,840.0 798.7,840.0" fill="rgba(0,0,0,0.06)" clip-path="url(#cg759)"/>
<clipPath id="cg1013"><polygon points="415.0,736.0 1030.0,589.9 1030.0,900.0 415.0,900.0"/></clipPath>
<polygon points="1004.6,560.0 1031.6,560.0 1090.4,840.0 1063.4,840.0" fill="rgba(0,0,0,0.06)" clip-path="url(#cg1013)"/>
<clipPath id="cq707"><polygon points="415.0,564.6 1030.0,415.9 1030.0,442.8 415.0,591.5"/></clipPath>
<polygon points="699.9,400.0 878.4,400.0 920.4,600.0 741.9,600.0" fill="rgba(0,0,0,0.06)" clip-path="url(#cq707)"/>
<clipPath id="cq994"><polygon points="415.0,564.6 1030.0,415.9 1030.0,442.8 415.0,591.5"/></clipPath>
<polygon points="989.8,400.0 1035.8,400.0 1077.8,600.0 1031.8,600.0" fill="rgba(0,0,0,0.06)" clip-path="url(#cq994)"/>
<polyline points="415.0,537.1 1030.0,388.4" fill="none" stroke="#4a4a4a" stroke-width="1.6" />
<polyline points="415.0,548.3 1030.0,399.6" fill="none" stroke="#8c8c8c" stroke-width="1.7"/>
<polyline points="415.0,548.3 1030.0,399.6" fill="none" stroke="#f2f2f2" stroke-width="0.9" stroke-dasharray="2,1.6"/>
<polyline points="415.0,564.6 1030.0,415.9" fill="none" stroke="#5e5e5e" stroke-width="1.15" />
<polyline points="415.0,766.6 1030.0,624.0" fill="none" stroke="#5e5e5e" stroke-width="1.15" />
<polyline points="415.0,780.8 1030.0,638.3" fill="none" stroke="#8c8c8c" stroke-width="1.7"/>
<polyline points="415.0,780.8 1030.0,638.3" fill="none" stroke="#f2f2f2" stroke-width="0.9" stroke-dasharray="2,1.6"/>
<polyline points="415.0,794.7 1030.0,649.1" fill="none" stroke="#4a4a4a" stroke-width="1.6" />
<polyline points="415.0,663.1 757.0,581.0 978.5,483.7 1030.0,471.0" fill="none" stroke="#bdbdbd" stroke-width="3" />
<polygon points="419.0,819.5 487.2,804.2 540.0,835.0 419.0,835.0" fill="#a3a3a3" stroke="#5e5e5e" stroke-width="1.15" />
<polyline points="440.4,816.3 443.6,834.9" fill="none" stroke="#5e5e5e" stroke-width="1.15" />
<polyline points="455.7,813.1 458.2,834.9" fill="none" stroke="#5e5e5e" stroke-width="1.15" />
<polyline points="492.1,809.0 474.3,834.9" fill="none" stroke="#5e5e5e" stroke-width="1.15" />
<polyline points="505.0,816.3 492.1,834.9" fill="none" stroke="#5e5e5e" stroke-width="1.15" />
<polyline points="517.9,826.0 511.5,834.9" fill="none" stroke="#5e5e5e" stroke-width="1.15" />
<polyline points="424.2,818.7 427.5,834.9" fill="none" stroke="#5e5e5e" stroke-width="1.15" />
<polyline points="489.7,797.7 530.9,826.0" fill="none" stroke="#555" stroke-width="1.3" />
<polyline points="545.5,785.0 541.5,794.0 542.3,802.0" fill="none" stroke="#555" stroke-width="1.3" />
<polyline points="545.5,803.5 531.0,826.0" fill="none" stroke="#5e5e5e" stroke-width="1.15" />
<polyline points="472.7,767.9 521.0,798.5" fill="none" stroke="#8c8c8c" stroke-width="1.7"/>
<polyline points="472.7,767.9 521.0,798.5" fill="none" stroke="#f2f2f2" stroke-width="0.9" stroke-dasharray="2,1.6"/>
<polyline points="521.0,798.5 560.0,822.0 575.0,835.0" fill="none" stroke="#8c8c8c" stroke-width="1.7"/>
<polyline points="521.0,798.5 560.0,822.0 575.0,835.0" fill="none" stroke="#f2f2f2" stroke-width="0.9" stroke-dasharray="2,1.6"/>
<polygon points="550.1,789.9 725.0,749.7 778.0,736.5 801.7,730.1 806.0,731.0 810.3,735.5 823.2,835.0 560.0,835.0 566.0,813.2 550.1,795.2" fill="#a3a3a3" stroke="#5e5e5e" stroke-width="1.15" />
<polygon points="766.2,778.5 778.0,776.3 782.3,801.0 770.5,803.2" fill="#f0f0f0" stroke="#5e5e5e" stroke-width="0.8" />
<polygon points="728.6,782.8 745.8,777.4 750.1,811.8 732.9,815.0" fill="#f0f0f0" stroke="#5e5e5e" stroke-width="0.8" />
<polygon points="722.1,801.0 728.6,800.0 730.7,816.1 724.3,817.2" fill="#f0f0f0" stroke="#5e5e5e" stroke-width="0.8" />
<polyline points="778.0,736.5 784.5,831.1" fill="none" stroke="#5e5e5e" stroke-width="1.15" />
<polyline points="757.6,741.9 772.7,811.8" fill="none" stroke="#5e5e5e" stroke-width="1.15" />
<polyline points="737.2,746.2 749.0,817.2" fill="none" stroke="#5e5e5e" stroke-width="1.15" />
<polyline points="720.0,749.4 728.6,816.1" fill="none" stroke="#5e5e5e" stroke-width="1.15" />
<polyline points="778.0,746.2 810.3,740.8" fill="none" stroke="#5e5e5e" stroke-width="1.15" />
<polyline points="766.2,770.9 814.6,762.3" fill="none" stroke="#5e5e5e" stroke-width="1.15" />
<polyline points="770.5,788.1 818.9,779.5" fill="none" stroke="#5e5e5e" stroke-width="1.15" />
<polyline points="772.7,805.3 820.0,796.7" fill="none" stroke="#5e5e5e" stroke-width="1.15" />
<polyline points="773.7,822.5 821.0,816.1" fill="none" stroke="#5e5e5e" stroke-width="1.15" />
<polyline points="578.6,783.5 583.9,803.6" fill="none" stroke="#5e5e5e" stroke-width="1.15" />
<polyline points="599.8,778.3 612.5,803.6" fill="none" stroke="#5e5e5e" stroke-width="1.15" />
<polyline points="610.4,775.1 631.5,799.4" fill="none" stroke="#5e5e5e" stroke-width="1.15" />
<polyline points="640.4,768.7 650.5,810.0" fill="none" stroke="#5e5e5e" stroke-width="1.15" />
<polyline points="656.9,763.5 667.5,807.9" fill="none" stroke="#5e5e5e" stroke-width="1.15" />
<polyline points="671.7,759.2 684.4,807.9" fill="none" stroke="#5e5e5e" stroke-width="1.15" />
<polyline points="688.6,755.0 699.2,814.2" fill="none" stroke="#5e5e5e" stroke-width="1.15" />
<polyline points="703.4,751.8 711.9,810.0" fill="none" stroke="#5e5e5e" stroke-width="1.15" />
<polyline points="583.9,803.6 568.1,818.4" fill="none" stroke="#5e5e5e" stroke-width="1.15" />
<polyline points="583.9,803.6 601.9,801.5 620.9,814.2" fill="none" stroke="#5e5e5e" stroke-width="1.15" />
<polyline points="620.9,814.2 631.5,799.4" fill="none" stroke="#5e5e5e" stroke-width="1.15" />
<polyline points="631.5,799.4 659.0,818.4" fill="none" stroke="#5e5e5e" stroke-width="1.15" />
<polygon points="857.6,722.0 861.9,715.0 1025.0,673.5 1025.0,835.0 877.0,835.0" fill="#a3a3a3" stroke="#5e5e5e" stroke-width="1.15" />
<polygon points="904.9,764.5 960.8,757.0 966.1,791.4 935.0,798.9 932.8,781.7 905.9,783.8" fill="#f0f0f0" stroke="#5e5e5e" stroke-width="0.8" />
<polygon points="960.8,735.5 973.7,732.2 986.6,788.1 967.2,791.4" fill="#f0f0f0" stroke="#5e5e5e" stroke-width="0.8" />
<polygon points="982.3,760.2 1001.6,758.0 1020.9,783.8 986.6,786.0" fill="#f0f0f0" stroke="#5e5e5e" stroke-width="0.8" />
<polygon points="939.3,816.1 954.3,811.8 956.5,829.0 941.4,829.0" fill="#f0f0f0" stroke="#5e5e5e" stroke-width="0.8" />
<polygon points="958.6,829.0 974.7,826.8 975.8,835.0 958.6,835.0" fill="#f0f0f0" stroke="#5e5e5e" stroke-width="0.8" />
<polygon points="943.6,751.6 946.8,751.6 947.2,756.3 944.0,756.3" fill="#f0f0f0" stroke="#5e5e5e" stroke-width="0.8" />
<polygon points="1012.3,730.1 1020.9,730.1 1022.0,739.8 1013.4,740.8" fill="#b3b3b3" stroke="#5e5e5e" stroke-width="1.15" />
<polyline points="879.1,712.9 889.8,766.6" fill="none" stroke="#5e5e5e" stroke-width="1.15" />
<polyline points="896.3,708.6 909.2,764.5" fill="none" stroke="#5e5e5e" stroke-width="1.15" />
<polyline points="911.3,706.4 923.1,762.3" fill="none" stroke="#5e5e5e" stroke-width="1.15" />
<polyline points="929.6,702.1 939.3,759.1" fill="none" stroke="#5e5e5e" stroke-width="1.15" />
<polyline points="945.7,700.0 960.8,764.5" fill="none" stroke="#5e5e5e" stroke-width="1.15" />
<polyline points="967.2,700.0 984.4,786.0" fill="none" stroke="#5e5e5e" stroke-width="1.15" />
<polyline points="986.6,700.0 999.4,762.3" fill="none" stroke="#5e5e5e" stroke-width="1.15" />
<polyline points="1005.9,700.0 1014.5,751.6" fill="none" stroke="#5e5e5e" stroke-width="1.15" />
<polyline points="861.9,753.7 887.7,750.5" fill="none" stroke="#5e5e5e" stroke-width="1.15" />
<polyline points="866.2,770.9 904.9,765.6" fill="none" stroke="#5e5e5e" stroke-width="1.15" />
<polyline points="870.5,791.4 935.0,781.7" fill="none" stroke="#5e5e5e" stroke-width="1.15" />
<polyline points="872.6,809.6 952.2,798.9" fill="none" stroke="#5e5e5e" stroke-width="1.15" />
<polyline points="932.8,781.7 935.0,798.9" fill="none" stroke="#5e5e5e" stroke-width="1.15" />
<polyline points="952.2,798.9 956.5,833.3" fill="none" stroke="#5e5e5e" stroke-width="1.15" />
<polyline points="965.1,790.3 1025.2,782.8" fill="none" stroke="#5e5e5e" stroke-width="1.15" />
<polyline points="956.5,833.3 1025.2,820.4" fill="none" stroke="#5e5e5e" stroke-width="1.15" />
<polyline points="814.6,720.4 823.2,829.0" fill="none" stroke="#5e5e5e" stroke-width="1.15" />
<polyline points="818.9,726.9 849.0,727.9" fill="none" stroke="#5e5e5e" stroke-width="1.15" />
<polyline points="847.9,714.0 850.1,727.9" fill="none" stroke="#555" stroke-width="1.2" />
<polyline points="829.6,700.0 843.6,766.6" fill="none" stroke="#8c8c8c" stroke-width="1.7"/>
<polyline points="829.6,700.0 843.6,766.6" fill="none" stroke="#f2f2f2" stroke-width="0.9" stroke-dasharray="2,1.6"/>
<polyline points="850.1,727.9 870.5,829.0" fill="none" stroke="#5e5e5e" stroke-width="1.15" />
<polyline points="720.0,724.7 724.3,725.8 784.5,708.6" fill="none" stroke="#5e5e5e" stroke-width="1.15" />
<polyline points="802.8,720.4 810.3,735.5" fill="none" stroke="#5e5e5e" stroke-width="1.15" />
<g transform="translate(448.3,567.7) rotate(-14)"><rect x="-4.0" y="-4.0" width="8.0" height="8.0" fill="none" stroke="#fff" stroke-width="1"/><rect x="-2.6" y="-2.6" width="5.2" height="5.2" fill="none" stroke="#707070" stroke-width="0.9"/><rect x="-5.0" y="-5.0" width="10.0" height="10.0" fill="none" stroke="#707070" stroke-width="0.9"/></g>
<g transform="translate(520.6,550.0) rotate(-14)"><rect x="-4.0" y="-4.0" width="8.0" height="8.0" fill="none" stroke="#fff" stroke-width="1"/><rect x="-2.6" y="-2.6" width="5.2" height="5.2" fill="none" stroke="#707070" stroke-width="0.9"/><rect x="-5.0" y="-5.0" width="10.0" height="10.0" fill="none" stroke="#707070" stroke-width="0.9"/></g>
<g transform="translate(596.3,533.2) rotate(-14)"><rect x="-4.0" y="-4.0" width="8.0" height="8.0" fill="none" stroke="#fff" stroke-width="1"/><rect x="-2.6" y="-2.6" width="5.2" height="5.2" fill="none" stroke="#707070" stroke-width="0.9"/><rect x="-5.0" y="-5.0" width="10.0" height="10.0" fill="none" stroke="#707070" stroke-width="0.9"/></g>
<g transform="translate(668.7,516.4) rotate(-14)"><rect x="-4.0" y="-4.0" width="8.0" height="8.0" fill="none" stroke="#fff" stroke-width="1"/><rect x="-2.6" y="-2.6" width="5.2" height="5.2" fill="none" stroke="#707070" stroke-width="0.9"/><rect x="-5.0" y="-5.0" width="10.0" height="10.0" fill="none" stroke="#707070" stroke-width="0.9"/></g>
<g transform="translate(741.0,498.7) rotate(-14)"><rect x="-4.0" y="-4.0" width="8.0" height="8.0" fill="none" stroke="#fff" stroke-width="1"/><rect x="-2.6" y="-2.6" width="5.2" height="5.2" fill="none" stroke="#707070" stroke-width="0.9"/><rect x="-5.0" y="-5.0" width="10.0" height="10.0" fill="none" stroke="#707070" stroke-width="0.9"/></g>
<g transform="translate(814.8,481.5) rotate(-14)"><rect x="-4.0" y="-4.0" width="8.0" height="8.0" fill="none" stroke="#fff" stroke-width="1"/><rect x="-2.6" y="-2.6" width="5.2" height="5.2" fill="none" stroke="#707070" stroke-width="0.9"/><rect x="-5.0" y="-5.0" width="10.0" height="10.0" fill="none" stroke="#707070" stroke-width="0.9"/></g>
<circle cx="492.9" cy="572.5" r="2.6" fill="#fff" stroke="#444" stroke-width="2.4"/>
<circle cx="559.4" cy="540.4" r="2.6" fill="#fff" stroke="#444" stroke-width="2.4"/>
<circle cx="658.1" cy="534.2" r="2.6" fill="#fff" stroke="#444" stroke-width="2.4"/>
<circle cx="704.6" cy="507.8" r="2.6" fill="#fff" stroke="#444" stroke-width="2.4"/>
<g transform="translate(513.5,563.4) rotate(0)"><rect x="-3.3" y="-3.3" width="6.6" height="6.6" fill="#9a9a9a" stroke="#4a4a4a" stroke-width="1.8"/></g>
<g transform="translate(733.3,511.6) rotate(0)"><rect x="-3.3" y="-3.3" width="6.6" height="6.6" fill="#9a9a9a" stroke="#4a4a4a" stroke-width="1.8"/></g>
<g transform="translate(612.6,474.3) rotate(0)"><rect x="-3.3" y="-3.3" width="6.6" height="6.6" fill="#9a9a9a" stroke="#4a4a4a" stroke-width="1.8"/></g>
<g transform="translate(423.4,520.3) rotate(0)"><rect x="-3.3" y="-3.3" width="6.6" height="6.6" fill="#9a9a9a" stroke="#4a4a4a" stroke-width="1.8"/></g>
<g transform="translate(668.1,516.4) rotate(-14)"><rect x="-4.0" y="-4.0" width="8.0" height="8.0" fill="none" stroke="#fff" stroke-width="1"/><rect x="-2.6" y="-2.6" width="5.2" height="5.2" fill="none" stroke="#707070" stroke-width="0.9"/><rect x="-5.0" y="-5.0" width="10.0" height="10.0" fill="none" stroke="#707070" stroke-width="0.9"/></g>
<g transform="translate(740.0,498.7) rotate(-14)"><rect x="-4.0" y="-4.0" width="8.0" height="8.0" fill="none" stroke="#fff" stroke-width="1"/><rect x="-2.6" y="-2.6" width="5.2" height="5.2" fill="none" stroke="#707070" stroke-width="0.9"/><rect x="-5.0" y="-5.0" width="10.0" height="10.0" fill="none" stroke="#707070" stroke-width="0.9"/></g>
<g transform="translate(815.7,481.5) rotate(-14)"><rect x="-4.0" y="-4.0" width="8.0" height="8.0" fill="none" stroke="#fff" stroke-width="1"/><rect x="-2.6" y="-2.6" width="5.2" height="5.2" fill="none" stroke="#707070" stroke-width="0.9"/><rect x="-5.0" y="-5.0" width="10.0" height="10.0" fill="none" stroke="#707070" stroke-width="0.9"/></g>
<g transform="translate(891.8,462.3) rotate(-14)"><rect x="-4.0" y="-4.0" width="8.0" height="8.0" fill="none" stroke="#fff" stroke-width="1"/><rect x="-2.6" y="-2.6" width="5.2" height="5.2" fill="none" stroke="#707070" stroke-width="0.9"/><rect x="-5.0" y="-5.0" width="10.0" height="10.0" fill="none" stroke="#707070" stroke-width="0.9"/></g>
<circle cx="657.6" cy="534.2" r="2.6" fill="#fff" stroke="#444" stroke-width="2.4"/>
<circle cx="704.5" cy="507.3" r="2.6" fill="#fff" stroke="#444" stroke-width="2.4"/>
<circle cx="852.1" cy="472.4" r="2.6" fill="#fff" stroke="#444" stroke-width="2.4"/>
<circle cx="1015.9" cy="437.4" r="2.6" fill="#fff" stroke="#444" stroke-width="2.4"/>
<g transform="translate(733.7,512.1) rotate(0)"><rect x="-3.3" y="-3.3" width="6.6" height="6.6" fill="#9a9a9a" stroke="#4a4a4a" stroke-width="1.8"/></g>
<g transform="translate(835.3,450.8) rotate(0)"><rect x="-3.3" y="-3.3" width="6.6" height="6.6" fill="#9a9a9a" stroke="#4a4a4a" stroke-width="1.8"/></g>
<g transform="translate(876.5,468.5) rotate(-14)"><rect x="-4" y="-2" width="8" height="4" fill="#aaa" stroke="#666" stroke-width="1"/></g>
<g transform="translate(486.6,735.4) rotate(-14)"><rect x="-7.5" y="-7.5" width="15.0" height="15.0" fill="none" stroke="#fff" stroke-width="1"/><rect x="-6.1" y="-6.1" width="12.2" height="12.2" fill="none" stroke="#707070" stroke-width="0.9"/><rect x="-8.5" y="-8.5" width="17.0" height="17.0" fill="none" stroke="#707070" stroke-width="0.9"/></g>
<g transform="translate(562.8,717.6) rotate(-14)"><rect x="-7.5" y="-7.5" width="15.0" height="15.0" fill="none" stroke="#fff" stroke-width="1"/><rect x="-6.1" y="-6.1" width="12.2" height="12.2" fill="none" stroke="#707070" stroke-width="0.9"/><rect x="-8.5" y="-8.5" width="17.0" height="17.0" fill="none" stroke="#707070" stroke-width="0.9"/></g>
<g transform="translate(634.2,700.9) rotate(-14)"><rect x="-7.5" y="-7.5" width="15.0" height="15.0" fill="none" stroke="#fff" stroke-width="1"/><rect x="-6.1" y="-6.1" width="12.2" height="12.2" fill="none" stroke="#707070" stroke-width="0.9"/><rect x="-8.5" y="-8.5" width="17.0" height="17.0" fill="none" stroke="#707070" stroke-width="0.9"/></g>
<g transform="translate(707.0,683.1) rotate(-14)"><rect x="-7.5" y="-7.5" width="15.0" height="15.0" fill="none" stroke="#fff" stroke-width="1"/><rect x="-6.1" y="-6.1" width="12.2" height="12.2" fill="none" stroke="#707070" stroke-width="0.9"/><rect x="-8.5" y="-8.5" width="17.0" height="17.0" fill="none" stroke="#707070" stroke-width="0.9"/></g>
<g transform="translate(785.1,664.9) rotate(-14)"><rect x="-7.5" y="-7.5" width="15.0" height="15.0" fill="none" stroke="#fff" stroke-width="1"/><rect x="-6.1" y="-6.1" width="12.2" height="12.2" fill="none" stroke="#707070" stroke-width="0.9"/><rect x="-8.5" y="-8.5" width="17.0" height="17.0" fill="none" stroke="#707070" stroke-width="0.9"/></g>
<circle cx="450.7" cy="744.0" r="2.6" fill="#fff" stroke="#444" stroke-width="2.4"/>
<circle cx="523.0" cy="710.4" r="2.6" fill="#fff" stroke="#444" stroke-width="2.4"/>
<circle cx="598.2" cy="708.5" r="2.6" fill="#fff" stroke="#444" stroke-width="2.4"/>
<circle cx="752.0" cy="672.1" r="2.6" fill="#fff" stroke="#444" stroke-width="2.4"/>
<g transform="translate(634.6,700.9) rotate(-14)"><rect x="-7.5" y="-7.5" width="15.0" height="15.0" fill="none" stroke="#fff" stroke-width="1"/><rect x="-6.1" y="-6.1" width="12.2" height="12.2" fill="none" stroke="#707070" stroke-width="0.9"/><rect x="-8.5" y="-8.5" width="17.0" height="17.0" fill="none" stroke="#707070" stroke-width="0.9"/></g>
<g transform="translate(706.4,683.1) rotate(-14)"><rect x="-7.5" y="-7.5" width="15.0" height="15.0" fill="none" stroke="#fff" stroke-width="1"/><rect x="-6.1" y="-6.1" width="12.2" height="12.2" fill="none" stroke="#707070" stroke-width="0.9"/><rect x="-8.5" y="-8.5" width="17.0" height="17.0" fill="none" stroke="#707070" stroke-width="0.9"/></g>
<g transform="translate(785.5,664.9) rotate(-14)"><rect x="-7.5" y="-7.5" width="15.0" height="15.0" fill="none" stroke="#fff" stroke-width="1"/><rect x="-6.1" y="-6.1" width="12.2" height="12.2" fill="none" stroke="#707070" stroke-width="0.9"/><rect x="-8.5" y="-8.5" width="17.0" height="17.0" fill="none" stroke="#707070" stroke-width="0.9"/></g>
<circle cx="752.4" cy="672.1" r="2.6" fill="#fff" stroke="#444" stroke-width="2.4"/>
<circle cx="915.3" cy="632.8" r="2.6" fill="#fff" stroke="#444" stroke-width="2.4"/>
<circle cx="938.8" cy="612.2" r="2.6" fill="#fff" stroke="#444" stroke-width="2.4"/>
<circle cx="1016.9" cy="596.4" r="2.6" fill="#fff" stroke="#444" stroke-width="2.4"/>
<g transform="translate(859.7,650.6) rotate(0)"><rect x="-3.3" y="-3.3" width="6.6" height="6.6" fill="#9a9a9a" stroke="#4a4a4a" stroke-width="1.8"/></g>
<g transform="translate(875.1,653.0) rotate(0)"><rect x="-3.3" y="-3.3" width="6.6" height="6.6" fill="#9a9a9a" stroke="#4a4a4a" stroke-width="1.8"/></g>
<g transform="translate(840.6,663.5) rotate(0)"><rect x="-3.3" y="-3.3" width="6.6" height="6.6" fill="#9a9a9a" stroke="#4a4a4a" stroke-width="1.8"/></g>
<g transform="translate(959.4,676.9) rotate(0)"><rect x="-3.3" y="-3.3" width="6.6" height="6.6" fill="#9a9a9a" stroke="#4a4a4a" stroke-width="1.8"/></g>
<g transform="translate(666.7,747.3) rotate(0)"><rect x="-3.3" y="-3.3" width="6.6" height="6.6" fill="#9a9a9a" stroke="#4a4a4a" stroke-width="1.8"/></g>
<g transform="translate(799.9,724.8) rotate(0)"><rect x="-3.3" y="-3.3" width="6.6" height="6.6" fill="#9a9a9a" stroke="#4a4a4a" stroke-width="1.8"/></g>
<g transform="translate(843.4,703.7) rotate(0)"><rect x="-3.3" y="-3.3" width="6.6" height="6.6" fill="#9a9a9a" stroke="#4a4a4a" stroke-width="1.8"/></g>
<g transform="translate(666.7,747.3) rotate(0)"><rect x="-3.3" y="-3.3" width="6.6" height="6.6" fill="#9a9a9a" stroke="#4a4a4a" stroke-width="1.8"/></g>
<g transform="translate(503.9,786.1) rotate(0)"><rect x="-3.3" y="-3.3" width="6.6" height="6.6" fill="#9a9a9a" stroke="#4a4a4a" stroke-width="1.8"/></g>
<g transform="translate(503.0,786.4) rotate(0)"><rect x="-3.3" y="-3.3" width="6.6" height="6.6" fill="#9a9a9a" stroke="#4a4a4a" stroke-width="1.8"/></g>
<circle cx="450.9" cy="744.4" r="2.6" fill="#fff" stroke="#444" stroke-width="2.4"/>
<circle cx="951.2" cy="94.0" r="2.6" fill="#fff" stroke="#444" stroke-width="2.4"/>
<circle cx="965.1" cy="164.2" r="2.6" fill="#fff" stroke="#444" stroke-width="2.4"/>
<circle cx="1018.5" cy="165.9" r="2.6" fill="#fff" stroke="#444" stroke-width="2.4"/>
<circle cx="999.9" cy="360.2" r="2.6" fill="#fff" stroke="#444" stroke-width="2.4"/>
<circle cx="996.9" cy="374.5" r="2.6" fill="#fff" stroke="#444" stroke-width="2.4"/>
<circle cx="990.5" cy="388.3" r="2.6" fill="#fff" stroke="#444" stroke-width="2.4"/>
<circle cx="999.9" cy="429.3" r="2.6" fill="#fff" stroke="#444" stroke-width="2.4"/>
<circle cx="1016.4" cy="434.9" r="2.6" fill="#fff" stroke="#444" stroke-width="2.4"/>
<circle cx="1023.7" cy="433.6" r="2.6" fill="#fff" stroke="#444" stroke-width="2.4"/>
<circle cx="938.7" cy="612.7" r="2.6" fill="#fff" stroke="#444" stroke-width="2.4"/>
<circle cx="915.8" cy="633.0" r="2.6" fill="#fff" stroke="#444" stroke-width="2.4"/>
<circle cx="1016.4" cy="596.7" r="2.6" fill="#fff" stroke="#444" stroke-width="2.4"/>
<circle cx="1002.0" cy="681.7" r="2.6" fill="#fff" stroke="#444" stroke-width="2.4"/>
<circle cx="502.2" cy="206.1" r="2.6" fill="#fff" stroke="#444" stroke-width="2.4"/>
<circle cx="951.2" cy="94" r="3.3" fill="none" stroke="#fff" stroke-width="1"/>
<g transform="translate(948.8,449.1) rotate(-14)"><rect x="-6.0" y="-6.0" width="12.0" height="12.0" fill="none" stroke="#fff" stroke-width="1"/><rect x="-4.6" y="-4.6" width="9.2" height="9.2" fill="none" stroke="#707070" stroke-width="0.9"/><rect x="-7.0" y="-7.0" width="14.0" height="14.0" fill="none" stroke="#707070" stroke-width="0.9"/></g>
<g transform="translate(986.9,618.0) rotate(-14)"><rect x="-6.0" y="-6.0" width="12.0" height="12.0" fill="none" stroke="#fff" stroke-width="1"/><rect x="-4.6" y="-4.6" width="9.2" height="9.2" fill="none" stroke="#707070" stroke-width="0.9"/><rect x="-7.0" y="-7.0" width="14.0" height="14.0" fill="none" stroke="#707070" stroke-width="0.9"/></g>
<g transform="translate(930.2,452.0) rotate(-14)"><rect x="-2.0" y="-5.0" width="4" height="10" rx="1" fill="none" stroke="#fff" stroke-width="1"/><rect x="-3.0" y="-6.0" width="6" height="12" rx="1.5" fill="none" stroke="#707070" stroke-width="0.8"/></g>
<g transform="translate(966.1,443.4) rotate(-14)"><rect x="-2.0" y="-5.0" width="4" height="10" rx="1" fill="none" stroke="#fff" stroke-width="1"/><rect x="-3.0" y="-6.0" width="6" height="12" rx="1.5" fill="none" stroke="#707070" stroke-width="0.8"/></g>
<g transform="translate(969.7,623.7) rotate(-14)"><rect x="-2.0" y="-5.0" width="4" height="10" rx="1" fill="none" stroke="#fff" stroke-width="1"/><rect x="-3.0" y="-6.0" width="6" height="12" rx="1.5" fill="none" stroke="#707070" stroke-width="0.8"/></g>
<g transform="translate(1005.6,615.1) rotate(-14)"><rect x="-2.0" y="-5.0" width="4" height="10" rx="1" fill="none" stroke="#fff" stroke-width="1"/><rect x="-3.0" y="-6.0" width="6" height="12" rx="1.5" fill="none" stroke="#707070" stroke-width="0.8"/></g>
<g transform="translate(959.6,676.9) rotate(0)"><rect x="-3.3" y="-3.3" width="6.6" height="6.6" fill="#9a9a9a" stroke="#4a4a4a" stroke-width="1.8"/></g>
<g transform="translate(794.4,435.4) rotate(0)"><rect x="-3.3" y="-3.3" width="6.6" height="6.6" fill="#9a9a9a" stroke="#4a4a4a" stroke-width="1.8"/></g>
<g transform="translate(808.5,206.0) rotate(0)"><rect x="-3.3" y="-3.3" width="6.6" height="6.6" fill="#9a9a9a" stroke="#4a4a4a" stroke-width="1.8"/></g>
<g transform="translate(790.7,363.0) rotate(-14)"><rect x="-4.5" y="-4.5" width="9.0" height="9.0" fill="none" stroke="#fff" stroke-width="1"/><rect x="-3.1" y="-3.1" width="6.2" height="6.2" fill="none" stroke="#707070" stroke-width="0.9"/><rect x="-5.5" y="-5.5" width="11.0" height="11.0" fill="none" stroke="#707070" stroke-width="0.9"/></g>
<polyline points="999.1,416 979.7,438.3 972.5,441.9 949.6,449.1 986.9,618 1000,616 1019,613 1025,619" fill="none" stroke="#86d11b" stroke-width="1.8" stroke-dasharray="4,2"/>
<path d="M782 460.5 C779 453 772 447.5 772 441.5 A10 10 0 0 1 792 441.5 C792 447.5 785 453 782 460.5 Z" fill="#0055cc"/>
<polyline points="421.0,523.9 491.7,508.3 501.2,514.9" fill="none" stroke="#5e5e5e" stroke-width="1.15" />
<polyline points="508.4,513.1 515.6,502.9 590.2,486.0 599.4,491.1" fill="none" stroke="#5e5e5e" stroke-width="1.15" />
<polyline points="609.5,490.1 639.1,472.8 660.0,468.6 847.2,433.3" fill="none" stroke="#5e5e5e" stroke-width="1.15" />
<polyline points="886.8,421.8 895.0,414.6 942.4,403.1 951.0,408.9" fill="none" stroke="#5e5e5e" stroke-width="1.15" />
<polyline points="421.0,799.4 427.5,795.3 430.7,790.5" fill="none" stroke="#5e5e5e" stroke-width="1.15" />
<polyline points="438.0,788.0 446.8,793.7 469.5,788.0 474.3,780.0" fill="none" stroke="#5e5e5e" stroke-width="1.15" />
<polyline points="564.1,758.0 573.2,764.1 596.6,760.1 600.7,749.9" fill="none" stroke="#5e5e5e" stroke-width="1.15" />
<polyline points="608.8,747.9 619.0,754.0 700.0,735.6 760.0,721.0 768.0,715.0" fill="none" stroke="#5e5e5e" stroke-width="1.15" />
<polyline points="881.3,686.5 893.3,693.7 955.5,679.3 960.3,669.7" fill="none" stroke="#5e5e5e" stroke-width="1.15" />
<polyline points="972.3,667.3 981.9,672.1 1025.0,662.5" fill="none" stroke="#5e5e5e" stroke-width="1.15" />
<text x="568.1" y="231.2" font-size="12.5" font-weight="bold" fill="#262626" text-anchor="middle">24</text>
<text x="596.3" y="235.5" font-size="12.5" font-weight="bold" fill="#262626" text-anchor="middle">22</text>
<text x="627.9" y="249.0" font-size="12.5" font-weight="bold" fill="#262626" text-anchor="middle">18</text>
<text x="425.8" y="220.2" font-size="12.5" font-weight="bold" fill="#262626" text-anchor="middle">37</text>
<text x="433.9" y="237.9" font-size="12.5" font-weight="bold" fill="#262626" text-anchor="middle">35</text>
<text x="440.2" y="255.2" font-size="12.5" font-weight="bold" fill="#262626" text-anchor="middle">33</text>
<text x="448.8" y="270.0" font-size="12.5" font-weight="bold" fill="#262626" text-anchor="middle">31</text>
<text x="483.3" y="275.3" font-size="12.5" font-weight="bold" fill="#262626" text-anchor="middle">27</text>
<text x="496.2" y="313.6" font-size="12.5" font-weight="bold" fill="#262626" text-anchor="middle">23</text>
<text x="536.0" y="312.2" font-size="12.5" font-weight="bold" fill="#262626" text-anchor="middle">19</text>
<text x="547.9" y="325.6" font-size="12.5" font-weight="bold" fill="#262626" text-anchor="middle">17</text>
<text x="580.0" y="340.0" font-size="12.5" font-weight="bold" fill="#262626" text-anchor="middle">13</text>
<text x="603.5" y="356.7" font-size="12.5" font-weight="bold" fill="#262626" text-anchor="middle">9</text>
<text x="616.0" y="364.4" font-size="12.5" font-weight="bold" fill="#262626" text-anchor="middle">7</text>
<text x="628.4" y="372.5" font-size="12.5" font-weight="bold" fill="#262626" text-anchor="middle">5</text>
<text x="641.4" y="379.3" font-size="12.5" font-weight="bold" fill="#262626" text-anchor="middle">3</text>
<text x="663.4" y="386.4" font-size="12.5" font-weight="bold" fill="#262626" text-anchor="middle">1</text>
<text x="501.5" y="427.6" font-size="12.5" font-weight="bold" fill="#262626" text-anchor="middle">229</text>
<text x="570.9" y="428.6" font-size="12.5" font-weight="bold" fill="#262626" text-anchor="middle">226</text>
<text x="549.4" y="444.4" font-size="12.5" font-weight="bold" fill="#262626" text-anchor="middle">227</text>
<text x="589.6" y="441.5" font-size="12.5" font-weight="bold" fill="#262626" text-anchor="middle">225</text>
<text x="616.4" y="435.8" font-size="12.5" font-weight="bold" fill="#262626" text-anchor="middle">223</text>
<text x="643.8" y="430.0" font-size="12.5" font-weight="bold" fill="#262626" text-anchor="middle">221</text>
<text x="694.1" y="426.2" font-size="12.5" font-weight="bold" fill="#262626" text-anchor="middle">218</text>
<text x="709.9" y="412.8" font-size="12.5" font-weight="bold" fill="#262626" text-anchor="middle">217</text>
<text x="453.1" y="467.9" font-size="12.5" font-weight="bold" fill="#262626" text-anchor="middle">231</text>
<text x="482.3" y="462.6" font-size="12.5" font-weight="bold" fill="#262626" text-anchor="middle">230</text>
<text x="422.0" y="467.9" font-size="12.5" font-weight="bold" fill="#262626" text-anchor="middle">33</text>
<text x="767.8" y="82.2" font-size="12.5" font-weight="bold" fill="#262626" text-anchor="middle">37</text>
<text x="773.5" y="100.5" font-size="12.5" font-weight="bold" fill="#262626" text-anchor="middle">35</text>
<text x="759.1" y="113.4" font-size="12.5" font-weight="bold" fill="#262626" text-anchor="middle">33</text>
<text x="757.7" y="131.6" font-size="12.5" font-weight="bold" fill="#262626" text-anchor="middle">31</text>
<text x="763.9" y="152.2" font-size="12.5" font-weight="bold" fill="#262626" text-anchor="middle">29</text>
<text x="741.4" y="169.9" font-size="12.5" font-weight="bold" fill="#262626" text-anchor="middle">27</text>
<text x="774.5" y="197.2" font-size="12.5" font-weight="bold" fill="#262626" text-anchor="middle">25</text>
<text x="752.9" y="211.6" font-size="12.5" font-weight="bold" fill="#262626" text-anchor="middle">23</text>
<text x="741.4" y="225.0" font-size="12.5" font-weight="bold" fill="#262626" text-anchor="middle">21</text>
<text x="737.1" y="239.9" font-size="12.5" font-weight="bold" fill="#262626" text-anchor="middle">19-19A</text>
<text x="754.3" y="260.5" font-size="12.5" font-weight="bold" fill="#262626" text-anchor="middle">17</text>
<text x="661.4" y="278.7" font-size="12.5" font-weight="bold" fill="#262626" text-anchor="middle">12</text>
<text x="756.7" y="286.3" font-size="12.5" font-weight="bold" fill="#262626" text-anchor="middle">11-15</text>
<text x="685.4" y="299.3" font-size="12.5" font-weight="bold" fill="#262626" text-anchor="middle">8</text>
<text x="700.7" y="302.6" font-size="12.5" font-weight="bold" fill="#262626" text-anchor="middle">6</text>
<text x="712.2" y="313.6" font-size="12.5" font-weight="bold" fill="#262626" text-anchor="middle">4</text>
<text x="772.1" y="316.0" font-size="12.5" font-weight="bold" fill="#262626" text-anchor="middle">9</text>
<text x="724.6" y="324.2" font-size="12.5" font-weight="bold" fill="#262626" text-anchor="middle">2</text>
<text x="775.4" y="330.9" font-size="12.5" font-weight="bold" fill="#262626" text-anchor="middle">7</text>
<text x="767.3" y="341.4" font-size="12.5" font-weight="bold" fill="#262626" text-anchor="middle">5</text>
<text x="741.4" y="348.6" font-size="12.5" font-weight="bold" fill="#262626" text-anchor="middle">1</text>
<text x="758.2" y="353.4" font-size="12.5" font-weight="bold" fill="#262626" text-anchor="middle">3</text>
<text x="895.7" y="87.0" font-size="12.5" font-weight="bold" fill="#262626" text-anchor="middle">28</text>
<text x="875.5" y="119.6" font-size="12.5" font-weight="bold" fill="#262626" text-anchor="middle">24</text>
<text x="871.7" y="142.6" font-size="12.5" font-weight="bold" fill="#262626" text-anchor="middle">22-22A</text>
<text x="866.9" y="167.5" font-size="12.5" font-weight="bold" fill="#262626" text-anchor="middle">20</text>
<text x="930.1" y="171.4" font-size="12.5" font-weight="bold" fill="#262626" text-anchor="middle">15C</text>
<text x="854.9" y="184.8" font-size="12.5" font-weight="bold" fill="#262626" text-anchor="middle">18</text>
<text x="857.3" y="203.4" font-size="12.5" font-weight="bold" fill="#262626" text-anchor="middle">16</text>
<text x="926.8" y="212.1" font-size="12.5" font-weight="bold" fill="#262626" text-anchor="middle">15-15B</text>
<text x="863.1" y="222.6" font-size="12.5" font-weight="bold" fill="#262626" text-anchor="middle">14</text>
<text x="852.5" y="237.9" font-size="12.5" font-weight="bold" fill="#262626" text-anchor="middle">12</text>
<text x="935.4" y="248.0" font-size="12.5" font-weight="bold" fill="#262626" text-anchor="middle">11-13A</text>
<text x="846.8" y="252.8" font-size="12.5" font-weight="bold" fill="#262626" text-anchor="middle">10</text>
<text x="859.7" y="267.2" font-size="12.5" font-weight="bold" fill="#262626" text-anchor="middle">8</text>
<text x="853.5" y="283.9" font-size="12.5" font-weight="bold" fill="#262626" text-anchor="middle">6</text>
<text x="946.4" y="285.4" font-size="12.5" font-weight="bold" fill="#262626" text-anchor="middle">9</text>
<text x="856.9" y="301.6" font-size="12.5" font-weight="bold" fill="#262626" text-anchor="middle">4</text>
<text x="957.0" y="318.4" font-size="12.5" font-weight="bold" fill="#262626" text-anchor="middle">7</text>
<text x="860.2" y="321.8" font-size="12.5" font-weight="bold" fill="#262626" text-anchor="middle">2-2B</text>
<text x="918.2" y="344.8" font-size="12.5" font-weight="bold" fill="#262626" text-anchor="middle">1-5</text>
<text x="843.0" y="384.0" font-size="12.5" font-weight="bold" fill="#262626" text-anchor="middle">216</text>
<text x="899.0" y="372.5" font-size="12.5" font-weight="bold" fill="#262626" text-anchor="middle">213-213A</text>
<text x="568.5" y="802.1" font-size="12.5" font-weight="bold" fill="#262626" text-anchor="middle">47</text>
<text x="589.6" y="795.9" font-size="12.5" font-weight="bold" fill="#262626" text-anchor="middle">48</text>
<text x="609.3" y="798.3" font-size="12.5" font-weight="bold" fill="#262626" text-anchor="middle">49</text>
<text x="631.8" y="790.6" font-size="12.5" font-weight="bold" fill="#262626" text-anchor="middle">50</text>
<text x="654.3" y="795.4" font-size="12.5" font-weight="bold" fill="#262626" text-anchor="middle">51</text>
<text x="686.9" y="795.9" font-size="12.5" font-weight="bold" fill="#262626" text-anchor="middle">53</text>
<text x="717.0" y="785.4" font-size="12.5" font-weight="bold" fill="#262626" text-anchor="middle">55</text>
<text x="730.9" y="770.0" font-size="12.5" font-weight="bold" fill="#262626" text-anchor="middle">56</text>
<text x="754.9" y="776.3" font-size="12.5" font-weight="bold" fill="#262626" text-anchor="middle">57</text>
<text x="794.2" y="743.2" font-size="12.5" font-weight="bold" fill="#262626" text-anchor="middle">59</text>
<text x="797.0" y="758.1" font-size="12.5" font-weight="bold" fill="#262626" text-anchor="middle">141</text>
<text x="792.3" y="780.6" font-size="12.5" font-weight="bold" fill="#262626" text-anchor="middle">139</text>
<text x="795.6" y="797.8" font-size="12.5" font-weight="bold" fill="#262626" text-anchor="middle">137</text>
<text x="794.7" y="814.6" font-size="12.5" font-weight="bold" fill="#262626" text-anchor="middle">135</text>
<text x="470.3" y="825.6" font-size="12.5" font-weight="bold" fill="#262626" text-anchor="middle">57</text>
<text x="450.7" y="834.7" font-size="12.5" font-weight="bold" fill="#262626" text-anchor="middle">46</text>
<text x="621.2" y="822.7" font-size="12.5" font-weight="bold" fill="#262626" text-anchor="middle">34</text>
<text x="794.7" y="831.4" font-size="12.5" font-weight="bold" fill="#262626" text-anchor="middle">133</text>
<text x="891.3" y="735.5" font-size="12.5" font-weight="bold" fill="#262626" text-anchor="middle">60</text>
<text x="909.6" y="738.9" font-size="12.5" font-weight="bold" fill="#262626" text-anchor="middle">61</text>
<text x="925.8" y="735.5" font-size="12.5" font-weight="bold" fill="#262626" text-anchor="middle">62</text>
<text x="959.4" y="726.0" font-size="12.5" font-weight="bold" fill="#262626" text-anchor="middle">64</text>
<text x="981.4" y="728.4" font-size="12.5" font-weight="bold" fill="#262626" text-anchor="middle">65</text>
<text x="999.6" y="725.5" font-size="12.5" font-weight="bold" fill="#262626" text-anchor="middle">66</text>
<text x="1014.0" y="710.2" font-size="12.5" font-weight="bold" fill="#262626" text-anchor="middle">67</text>
<text x="876.0" y="766.7" font-size="12.5" font-weight="bold" fill="#262626" text-anchor="middle">198</text>
<text x="887.0" y="783.5" font-size="12.5" font-weight="bold" fill="#262626" text-anchor="middle">196</text>
<text x="902.8" y="800.2" font-size="12.5" font-weight="bold" fill="#262626" text-anchor="middle">194</text>
<text x="911.5" y="824.2" font-size="12.5" font-weight="bold" fill="#262626" text-anchor="middle">192</text>
<text x="593.5" y="193.3" font-size="11" fill="#6e6e6e" stroke="#f4f4f4" stroke-width="2.6" paint-order="stroke" stroke-linejoin="round" text-anchor="middle">217T4</text>
<text x="615.0" y="209.1" font-size="11" fill="#6e6e6e" stroke="#f4f4f4" stroke-width="2.6" paint-order="stroke" stroke-linejoin="round" text-anchor="middle">217R4</text>
<text x="460.3" y="396.0" font-size="11" fill="#6e6e6e" stroke="#f4f4f4" stroke-width="2.6" paint-order="stroke" stroke-linejoin="round" text-anchor="middle">239P5</text>
<text x="504.8" y="413.7" font-size="11" fill="#6e6e6e" stroke="#f4f4f4" stroke-width="2.6" paint-order="stroke" stroke-linejoin="round" text-anchor="middle">239M5</text>
<text x="551.3" y="410.3" font-size="11" fill="#6e6e6e" stroke="#f4f4f4" stroke-width="2.6" paint-order="stroke" stroke-linejoin="round" text-anchor="middle">239K5</text>
<text x="452.1" y="446.3" font-size="11" fill="#6e6e6e" stroke="#f4f4f4" stroke-width="2.6" paint-order="stroke" stroke-linejoin="round" text-anchor="middle">239C4</text>
<text x="730.4" y="85.5" font-size="11" fill="#6e6e6e" stroke="#f4f4f4" stroke-width="2.6" paint-order="stroke" stroke-linejoin="round" text-anchor="middle">217P3</text>
<text x="731.3" y="102.3" font-size="11" fill="#6e6e6e" stroke="#f4f4f4" stroke-width="2.6" paint-order="stroke" stroke-linejoin="round" text-anchor="middle">217K4</text>
<text x="717.0" y="117.6" font-size="11" fill="#6e6e6e" stroke="#f4f4f4" stroke-width="2.6" paint-order="stroke" stroke-linejoin="round" text-anchor="middle">217N3</text>
<text x="712.7" y="138.7" font-size="11" fill="#6e6e6e" stroke="#f4f4f4" stroke-width="2.6" paint-order="stroke" stroke-linejoin="round" text-anchor="middle">217M3</text>
<text x="707.4" y="160.3" font-size="11" fill="#6e6e6e" stroke="#f4f4f4" stroke-width="2.6" paint-order="stroke" stroke-linejoin="round" text-anchor="middle">217A3</text>
<text x="732.8" y="186.1" font-size="11" fill="#6e6e6e" stroke="#f4f4f4" stroke-width="2.6" paint-order="stroke" stroke-linejoin="round" text-anchor="middle">217L3</text>
<text x="727.0" y="201.5" font-size="11" fill="#6e6e6e" stroke="#f4f4f4" stroke-width="2.6" paint-order="stroke" stroke-linejoin="round" text-anchor="middle">217K3</text>
<text x="659.5" y="214.4" font-size="11" fill="#6e6e6e" stroke="#f4f4f4" stroke-width="2.6" paint-order="stroke" stroke-linejoin="round" text-anchor="middle">217D4</text>
<text x="655.2" y="262.3" font-size="11" fill="#6e6e6e" stroke="#f4f4f4" stroke-width="2.6" paint-order="stroke" stroke-linejoin="round" text-anchor="middle">217F2</text>
<text x="913.9" y="282.9" font-size="11" fill="#6e6e6e" stroke="#f4f4f4" stroke-width="2.6" paint-order="stroke" stroke-linejoin="round" text-anchor="middle">79M3</text>
<text x="852.5" y="340.4" font-size="11" fill="#6e6e6e" stroke="#f4f4f4" stroke-width="2.6" paint-order="stroke" stroke-linejoin="round" text-anchor="middle">79/2B</text>
<text x="947.4" y="369.1" font-size="11" fill="#6e6e6e" stroke="#f4f4f4" stroke-width="2.6" paint-order="stroke" stroke-linejoin="round" text-anchor="middle">79P3</text>
<text x="967.5" y="744.6" font-size="11" fill="#6e6e6e" stroke="#f4f4f4" stroke-width="2.6" paint-order="stroke" stroke-linejoin="round" text-anchor="middle">77P3</text>
<text x="915.3" y="775.2" font-size="11" fill="#6e6e6e" stroke="#f4f4f4" stroke-width="2.6" paint-order="stroke" stroke-linejoin="round" text-anchor="middle">77A4</text>
<text x="1008.2" y="836.6" font-size="11" fill="#6e6e6e" stroke="#f4f4f4" stroke-width="2.6" paint-order="stroke" stroke-linejoin="round" text-anchor="middle">77E4</text>
<text x="742.0" y="822.2" font-size="11" fill="#6e6e6e" stroke="#f4f4f4" stroke-width="2.6" paint-order="stroke" stroke-linejoin="round" text-anchor="middle">242N2</text>
<text transform="translate(437.5,188.0) rotate(33.2)" x="0" y="5.2" font-size="14.5" font-weight="normal" fill="#111" stroke="#fff" stroke-width="4.8" paint-order="stroke" stroke-linejoin="round" text-anchor="end">Lorkenstraat</text>
<text transform="translate(539,254) rotate(33.2)" x="0" y="4" font-size="13" fill="#222" text-anchor="middle">Lork</text>
<text transform="translate(585.7,285.5) rotate(33.2)" x="0" y="5.4" font-size="15" font-weight="normal" fill="#111" stroke="#fff" stroke-width="4.8" paint-order="stroke" stroke-linejoin="round" text-anchor="middle">Lorkenstraat</text>
<text transform="translate(823.5,148.0) rotate(-78)" x="0" y="5.1" font-size="14.2" font-weight="normal" fill="#111" stroke="#fff" stroke-width="4.8" paint-order="stroke" stroke-linejoin="round" text-anchor="start">Magnoliastraat</text>
<text transform="translate(811.0,234.6) rotate(-80.6)" x="0" y="3.8" font-size="10.5" font-weight="normal" fill="#222" stroke="#fff" stroke-width="1.5" paint-order="stroke" stroke-linejoin="round" text-anchor="middle">Magnoliastraat</text>
<text transform="translate(821.0,417.0) rotate(77)" x="0" y="5.1" font-size="14.2" font-weight="normal" fill="#111" stroke="#fff" stroke-width="4.8" paint-order="stroke" stroke-linejoin="round" text-anchor="middle">Magnoliastraat</text>
<text transform="translate(1004.5,261.0) rotate(80)" x="0" y="5.0" font-size="13.9" font-weight="normal" fill="#111" stroke="#fff" stroke-width="4.8" paint-order="stroke" stroke-linejoin="round" text-anchor="end">Frans van Ryhovelaan</text>
<text transform="translate(463.5,537.0) rotate(-13.6)" x="0" y="5.2" font-size="14.5" font-weight="normal" fill="#111" stroke="#fff" stroke-width="4.8" paint-order="stroke" stroke-linejoin="round" text-anchor="middle">Nieuwevaart</text>
<text transform="translate(908.0,429.0) rotate(-13.6)" x="0" y="5.2" font-size="14.5" font-weight="normal" fill="#111" stroke="#fff" stroke-width="4.8" paint-order="stroke" stroke-linejoin="round" text-anchor="middle">Nieuwevaart</text>
<text transform="translate(985.0,413.0) rotate(-13.6)" x="0" y="5.2" font-size="14.5" font-weight="normal" fill="#111" stroke="#fff" stroke-width="4.8" paint-order="stroke" stroke-linejoin="round" text-anchor="start">Nieuwevaart</text>
<text transform="translate(626.0,613.2) rotate(-14.5)" x="0" y="4.0" font-size="11" font-weight="bold" fill="#707070" stroke="#fff" stroke-width="0" paint-order="stroke" stroke-linejoin="round" text-anchor="middle">Verbindingkanaal</text>
<text transform="translate(720.4,706.6) rotate(-13.6)" x="0" y="5.2" font-size="14.5" font-weight="normal" fill="#111" stroke="#fff" stroke-width="4.8" paint-order="stroke" stroke-linejoin="round" text-anchor="middle">Gasmeterlaan</text>
<text transform="translate(908.6,662.0) rotate(-13.6)" x="0" y="5.2" font-size="14.5" font-weight="normal" fill="#111" stroke="#fff" stroke-width="4.8" paint-order="stroke" stroke-linejoin="round" text-anchor="middle">Gasmeterlaan</text>
<text transform="translate(1013.0,645.0) rotate(-13.6)" x="0" y="5.2" font-size="14.5" font-weight="normal" fill="#111" stroke="#fff" stroke-width="4.8" paint-order="stroke" stroke-linejoin="round" text-anchor="start">Gasmeterlaan</text>
<text transform="translate(837.0,762.0) rotate(71)" x="0" y="5.1" font-size="14.2" font-weight="normal" fill="#111" stroke="#fff" stroke-width="4.8" paint-order="stroke" stroke-linejoin="round" text-anchor="start">Ijskelderstraat</text></svg></div><!--/map-->
<div class="a" style="left:895px;top:97px;width:105px;height:35px;background:#fff;box-shadow:0 0 1px rgba(0,0,0,0.15)"></div>
<svg class="a" style="left:904px;top:106px" width="18" height="18" viewBox="0 0 18 18"><path d="M2.2 15.8 L3.2 11.6 L12.6 2.2 A1.9 1.9 0 0 1 15.8 5.4 L6.4 14.8 Z M11.2 3.6 L14.4 6.8 M3.2 11.6 L6.4 14.8" fill="none" stroke="#333" stroke-width="1.4" stroke-linejoin="round"/></svg>
<svg class="a" style="left:935px;top:111px" width="26" height="11" viewBox="0 0 26 11"><rect x="1.6" y="1.6" width="23" height="8" fill="none" stroke="#333" stroke-width="1.2"/><path d="M5 1.6V4.3M8.5 1.6V5.3M12 1.6V4.3M15.5 1.6V5.3M19 1.6V4.3M22 1.6V4" stroke="#333" stroke-width="1"/></svg>
<svg class="a" style="left:975px;top:107px" width="16" height="16" viewBox="0 0 16 16"><circle cx="12" cy="3.6" r="2.1" fill="none" stroke="#333" stroke-width="1.2"/><circle cx="3.6" cy="8.1" r="2.1" fill="none" stroke="#333" stroke-width="1.2"/><circle cx="12" cy="12.6" r="2.1" fill="none" stroke="#333" stroke-width="1.2"/><path d="M5.5 7.1 L10.1 4.6 M5.5 9.1 L10.1 11.6" stroke="#333" stroke-width="1.2"/></svg>
<div class="a" style="left:537px;top:817px;width:371px;height:18px;background:rgba(255,255,255,0.78)"></div>
<div class="a" style="left:553px;top:821.5px;font-size:10px;line-height:10px;color:#333">Lambert 72</div>
<div class="a" style="left:625px;top:821px;width:80px;height:11.5px;border:1px solid #555;border-top:none"></div>
<div class="a" style="left:653px;top:821.5px;font-size:10px;line-height:10px;color:#333">20 m</div>
<div class="a" style="left:856px;top:821.5px;font-size:10px;line-height:10px;color:#333">Bronnen</div>



<div style="position:absolute;left:1025px;top:72px;width:1px;height:763px;background:#c5ccd6"></div>
<div class="a" style="left:1041.5px;top:92.3px;font-size:18px;line-height:18px;letter-spacing:0px;-webkit-text-stroke:0.35px #333332">Lagen</div>
<svg class="a" style="left:1416px;top:87px" width="14" height="14" viewBox="0 0 14 14"><path d="M1 1 L13 13 M13 1 L1 13" stroke="#333" stroke-width="1.5" fill="none"/></svg>
<div class="hr" style="left:1026px;top:130px;width:416px"></div>
<div class="a" style="left:1041px;top:146px;width:246px;height:35px;background:#0055cc;border-radius:3px;color:#fff;font-size:15px;font-weight:bold;text-align:center;line-height:35px;letter-spacing:-0.4px">+ Lagen toevoegen</div>
<div class="a" style="left:1301px;top:146px;width:130px;height:35px;border:2px solid #0055cc;border-radius:3px;color:#0055cc;font-size:15px;font-weight:bold;text-align:center;line-height:31px;letter-spacing:-0.4px">+ Via service</div>
<div class="hr" style="left:1026px;top:196px;width:416px"></div>
<svg class="a" style="left:1040px;top:217px" width="22" height="20" viewBox="0 0 22 20"><path d="M1.6 4.2 L8.3 1.7 L13.7 4.2 L20.2 1.5 L20.4 15.2 L13.7 17.9 L8.3 15.5 L1.6 17.9 Z" fill="none" stroke="#333" stroke-width="1.5" stroke-linejoin="round"/><path d="M8.3 1.7 V15.5 M13.7 4.2 V17.9" stroke="#555" stroke-width="1.1"/></svg>
<div class="a" style="left:1076.5px;top:220px;font-size:14px;line-height:14px;letter-spacing:0.05px">Wegennet</div>
<div style="position:absolute;left:1346px;top:202px;width:1px;height:49px;background:#cbd2da"></div>
<div style="position:absolute;left:1396px;top:202px;width:1px;height:49px;background:#cbd2da"></div>
<svg class="a" style="left:1359px;top:218px" width="24" height="17" viewBox="0 0 24 17"><path d="M1.4 8.8 C3.5 4.2 7.5 1.7 12 1.7 C16.5 1.7 20.5 4.2 22.6 8.8 C20.5 13.4 16.5 15.9 12 15.9 C7.5 15.9 3.5 13.4 1.4 8.8Z" fill="none" stroke="#0055cc" stroke-width="1.9"/><circle cx="12.1" cy="7.6" r="5.2" fill="#0055cc"/><path d="M8.7 7.2 A3.4 3.4 0 0 1 11.2 4.3" fill="none" stroke="#fff" stroke-width="1.1"/></svg>
<div class="a" style="left:1412px;top:224px;width:5px;height:5px;background:#0055cc;border-radius:1px"></div>
<div class="a" style="left:1418.5px;top:224px;width:5px;height:5px;background:#0055cc;border-radius:1px"></div>
<div class="a" style="left:1425px;top:224px;width:5px;height:5px;background:#0055cc;border-radius:1px"></div>
<div class="hr" style="left:1026px;top:257px;width:416px"></div>
<div class="a" style="left:1026px;top:258px;width:416px;height:486px;background:#f7f9fc"></div>
<div class="hr" style="left:1026px;top:744px;width:416px"></div>
<div class="a" id="thumb" style="left:1041px;top:761px;width:60px;height:60px;border:1px solid #c8d2de;background:#999;overflow:hidden"><svg width="58" height="58" viewBox="0 0 58 58">
<polygon points="0.0,12.6 0.0,20.6 45.8,59.7 52.2,59.7" fill="#c4c4c4"/>
<polygon points="0.0,10.3 0.0,15.8 28.5,4.0 26.9,0.0" fill="#cfcfcf"/>
<path d="M0.8,56.9 Q22.9,30.0 46.6,0.0" fill="none" stroke="#bdbdbd" stroke-width="2.2"/>
<path d="M52.2,23.7 L56.9,59.7" fill="none" stroke="#b8b8b8" stroke-width="2.2"/>
<path d="M41.1,26.9 L59.7,20.6" fill="none" stroke="#b0b0b0" stroke-width="1.5"/>
<polygon points="29.2,33.2 36.4,30.0 37.9,37.9 31.6,41.1" fill="#dedede"/>
<polygon points="37.9,31.6 48.2,32.4 50.6,43.5 41.1,44.3" fill="#d6d6d6"/>
<polygon points="19.0,7.9 26.9,8.7 26.1,15.8 20.6,15.0" fill="#d8d8d8"/>
<polygon points="41.1,6.3 52.2,3.2 53.8,12.6 44.3,15.8" fill="#c8c8c8"/>
<polygon points="11.1,47.4 23.7,44.3 26.9,53.8 12.6,58.5" fill="#cdcdcd"/>
<polygon points="0.0,30.0 5.5,31.6 4.7,41.1 0.0,37.9" fill="#c6c6c6"/>
<polygon points="12.6,15.8 20.6,17.4 19.8,22.9 13.4,21.3" fill="#c8c8c8"/>
<polygon points="31.6,17.4 41.1,15.0 41.1,22.9 32.4,24.5" fill="#cacaca"/>
<polygon points="0.0,0.0 12.6,0.0 11.1,3.2 0.0,6.3" fill="#c8c8c8"/>
<circle cx="52.6" cy="24.5" r="2.2" fill="#a8a8a8"/>
</svg></div>
<div class="a" style="left:1116.5px;top:776.9px;font-size:11px;line-height:11px;letter-spacing:0px;-webkit-text-stroke:0.2px #333">ACHTERGROND</div>
<div class="a blue" style="left:1116.5px;top:790.8px;font-size:15px;line-height:15px;letter-spacing:-0.1px">Basiskaart Vlaanderen: GRB grijs</div>
<svg class="a" style="left:1416px;top:785px" width="15" height="10" viewBox="0 0 15 10"><path d="M1.2 8.5 L7.5 2 L13.8 8.5" fill="none" stroke="#333" stroke-width="1.4"/></svg>

</body></html>
